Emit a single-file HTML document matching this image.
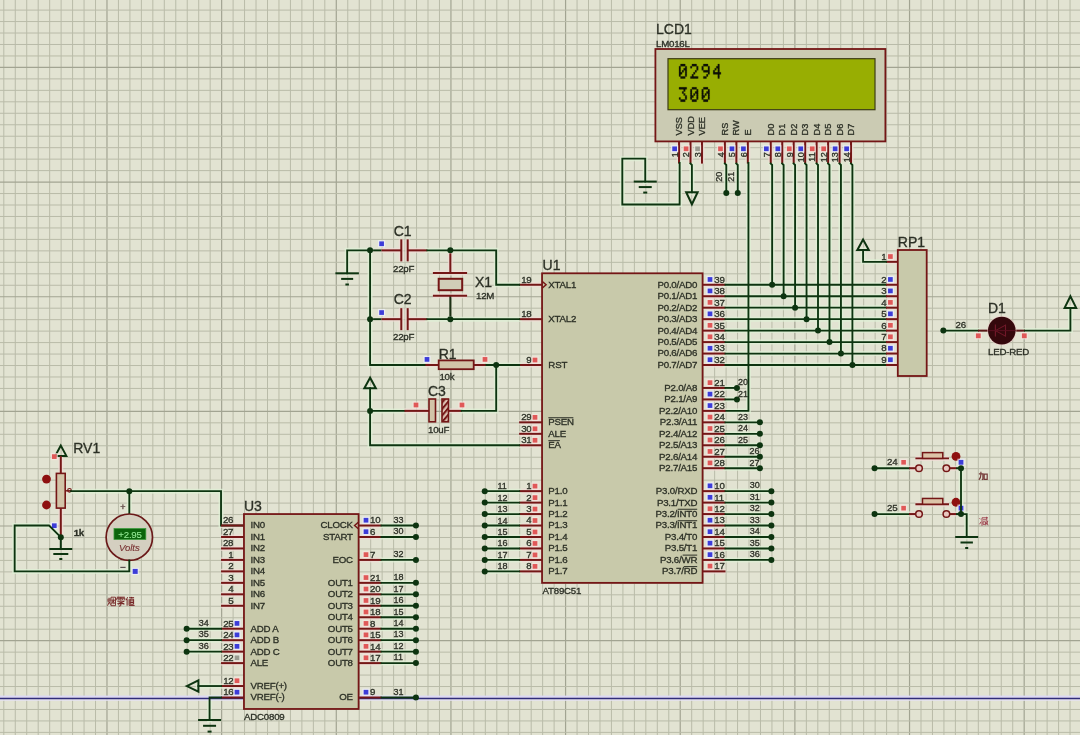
<!DOCTYPE html>
<html><head><meta charset="utf-8"><style>html,body{margin:0;padding:0;background:#e2e3d2;overflow:hidden}svg{display:block;filter:blur(0.45px)}</style></head>
<body><svg width="1080" height="735" viewBox="0 0 1080 735" font-family="Liberation Sans, sans-serif"><g shape-rendering="auto"><line x1="3.8" y1="0" x2="3.8" y2="735" stroke="#b9bba8" stroke-width="1"/><line x1="15.27" y1="0" x2="15.27" y2="735" stroke="#b9bba8" stroke-width="1"/><line x1="26.73" y1="0" x2="26.73" y2="735" stroke="#b9bba8" stroke-width="1"/><line x1="38.19" y1="0" x2="38.19" y2="735" stroke="#b9bba8" stroke-width="1"/><line x1="49.66" y1="0" x2="49.66" y2="735" stroke="#b9bba8" stroke-width="1"/><line x1="61.12" y1="0" x2="61.12" y2="735" stroke="#b9bba8" stroke-width="1"/><line x1="72.59" y1="0" x2="72.59" y2="735" stroke="#b9bba8" stroke-width="1"/><line x1="84.05" y1="0" x2="84.05" y2="735" stroke="#b9bba8" stroke-width="1"/><line x1="95.52" y1="0" x2="95.52" y2="735" stroke="#b9bba8" stroke-width="1"/><line x1="106.98" y1="0" x2="106.98" y2="735" stroke="#a2a492" stroke-width="1.2"/><line x1="118.45" y1="0" x2="118.45" y2="735" stroke="#b9bba8" stroke-width="1"/><line x1="129.91" y1="0" x2="129.91" y2="735" stroke="#b9bba8" stroke-width="1"/><line x1="141.38" y1="0" x2="141.38" y2="735" stroke="#b9bba8" stroke-width="1"/><line x1="152.84" y1="0" x2="152.84" y2="735" stroke="#b9bba8" stroke-width="1"/><line x1="164.31" y1="0" x2="164.31" y2="735" stroke="#b9bba8" stroke-width="1"/><line x1="175.78" y1="0" x2="175.78" y2="735" stroke="#b9bba8" stroke-width="1"/><line x1="187.24" y1="0" x2="187.24" y2="735" stroke="#b9bba8" stroke-width="1"/><line x1="198.71" y1="0" x2="198.71" y2="735" stroke="#b9bba8" stroke-width="1"/><line x1="210.17" y1="0" x2="210.17" y2="735" stroke="#b9bba8" stroke-width="1"/><line x1="221.64" y1="0" x2="221.64" y2="735" stroke="#a2a492" stroke-width="1.2"/><line x1="233.1" y1="0" x2="233.1" y2="735" stroke="#b9bba8" stroke-width="1"/><line x1="244.56" y1="0" x2="244.56" y2="735" stroke="#b9bba8" stroke-width="1"/><line x1="256.03" y1="0" x2="256.03" y2="735" stroke="#b9bba8" stroke-width="1"/><line x1="267.5" y1="0" x2="267.5" y2="735" stroke="#b9bba8" stroke-width="1"/><line x1="278.96" y1="0" x2="278.96" y2="735" stroke="#b9bba8" stroke-width="1"/><line x1="290.43" y1="0" x2="290.43" y2="735" stroke="#b9bba8" stroke-width="1"/><line x1="301.89" y1="0" x2="301.89" y2="735" stroke="#b9bba8" stroke-width="1"/><line x1="313.36" y1="0" x2="313.36" y2="735" stroke="#b9bba8" stroke-width="1"/><line x1="324.82" y1="0" x2="324.82" y2="735" stroke="#b9bba8" stroke-width="1"/><line x1="336.29" y1="0" x2="336.29" y2="735" stroke="#a2a492" stroke-width="1.2"/><line x1="347.75" y1="0" x2="347.75" y2="735" stroke="#b9bba8" stroke-width="1"/><line x1="359.22" y1="0" x2="359.22" y2="735" stroke="#b9bba8" stroke-width="1"/><line x1="370.68" y1="0" x2="370.68" y2="735" stroke="#b9bba8" stroke-width="1"/><line x1="382.14" y1="0" x2="382.14" y2="735" stroke="#b9bba8" stroke-width="1"/><line x1="393.61" y1="0" x2="393.61" y2="735" stroke="#b9bba8" stroke-width="1"/><line x1="405.07" y1="0" x2="405.07" y2="735" stroke="#b9bba8" stroke-width="1"/><line x1="416.54" y1="0" x2="416.54" y2="735" stroke="#b9bba8" stroke-width="1"/><line x1="428" y1="0" x2="428" y2="735" stroke="#b9bba8" stroke-width="1"/><line x1="439.47" y1="0" x2="439.47" y2="735" stroke="#b9bba8" stroke-width="1"/><line x1="450.94" y1="0" x2="450.94" y2="735" stroke="#a2a492" stroke-width="1.2"/><line x1="462.4" y1="0" x2="462.4" y2="735" stroke="#b9bba8" stroke-width="1"/><line x1="473.87" y1="0" x2="473.87" y2="735" stroke="#b9bba8" stroke-width="1"/><line x1="485.33" y1="0" x2="485.33" y2="735" stroke="#b9bba8" stroke-width="1"/><line x1="496.8" y1="0" x2="496.8" y2="735" stroke="#b9bba8" stroke-width="1"/><line x1="508.26" y1="0" x2="508.26" y2="735" stroke="#b9bba8" stroke-width="1"/><line x1="519.72" y1="0" x2="519.72" y2="735" stroke="#b9bba8" stroke-width="1"/><line x1="531.19" y1="0" x2="531.19" y2="735" stroke="#b9bba8" stroke-width="1"/><line x1="542.65" y1="0" x2="542.65" y2="735" stroke="#b9bba8" stroke-width="1"/><line x1="554.12" y1="0" x2="554.12" y2="735" stroke="#b9bba8" stroke-width="1"/><line x1="565.58" y1="0" x2="565.58" y2="735" stroke="#a2a492" stroke-width="1.2"/><line x1="577.05" y1="0" x2="577.05" y2="735" stroke="#b9bba8" stroke-width="1"/><line x1="588.51" y1="0" x2="588.51" y2="735" stroke="#b9bba8" stroke-width="1"/><line x1="599.98" y1="0" x2="599.98" y2="735" stroke="#b9bba8" stroke-width="1"/><line x1="611.44" y1="0" x2="611.44" y2="735" stroke="#b9bba8" stroke-width="1"/><line x1="622.91" y1="0" x2="622.91" y2="735" stroke="#b9bba8" stroke-width="1"/><line x1="634.38" y1="0" x2="634.38" y2="735" stroke="#b9bba8" stroke-width="1"/><line x1="645.84" y1="0" x2="645.84" y2="735" stroke="#b9bba8" stroke-width="1"/><line x1="657.3" y1="0" x2="657.3" y2="735" stroke="#b9bba8" stroke-width="1"/><line x1="668.77" y1="0" x2="668.77" y2="735" stroke="#b9bba8" stroke-width="1"/><line x1="680.23" y1="0" x2="680.23" y2="735" stroke="#a2a492" stroke-width="1.2"/><line x1="691.7" y1="0" x2="691.7" y2="735" stroke="#b9bba8" stroke-width="1"/><line x1="703.16" y1="0" x2="703.16" y2="735" stroke="#b9bba8" stroke-width="1"/><line x1="714.63" y1="0" x2="714.63" y2="735" stroke="#b9bba8" stroke-width="1"/><line x1="726.09" y1="0" x2="726.09" y2="735" stroke="#b9bba8" stroke-width="1"/><line x1="737.56" y1="0" x2="737.56" y2="735" stroke="#b9bba8" stroke-width="1"/><line x1="749.02" y1="0" x2="749.02" y2="735" stroke="#b9bba8" stroke-width="1"/><line x1="760.49" y1="0" x2="760.49" y2="735" stroke="#b9bba8" stroke-width="1"/><line x1="771.95" y1="0" x2="771.95" y2="735" stroke="#b9bba8" stroke-width="1"/><line x1="783.42" y1="0" x2="783.42" y2="735" stroke="#b9bba8" stroke-width="1"/><line x1="794.88" y1="0" x2="794.88" y2="735" stroke="#a2a492" stroke-width="1.2"/><line x1="806.35" y1="0" x2="806.35" y2="735" stroke="#b9bba8" stroke-width="1"/><line x1="817.81" y1="0" x2="817.81" y2="735" stroke="#b9bba8" stroke-width="1"/><line x1="829.28" y1="0" x2="829.28" y2="735" stroke="#b9bba8" stroke-width="1"/><line x1="840.74" y1="0" x2="840.74" y2="735" stroke="#b9bba8" stroke-width="1"/><line x1="852.21" y1="0" x2="852.21" y2="735" stroke="#b9bba8" stroke-width="1"/><line x1="863.67" y1="0" x2="863.67" y2="735" stroke="#b9bba8" stroke-width="1"/><line x1="875.14" y1="0" x2="875.14" y2="735" stroke="#b9bba8" stroke-width="1"/><line x1="886.6" y1="0" x2="886.6" y2="735" stroke="#b9bba8" stroke-width="1"/><line x1="898.07" y1="0" x2="898.07" y2="735" stroke="#b9bba8" stroke-width="1"/><line x1="909.53" y1="0" x2="909.53" y2="735" stroke="#a2a492" stroke-width="1.2"/><line x1="921" y1="0" x2="921" y2="735" stroke="#b9bba8" stroke-width="1"/><line x1="932.46" y1="0" x2="932.46" y2="735" stroke="#b9bba8" stroke-width="1"/><line x1="943.93" y1="0" x2="943.93" y2="735" stroke="#b9bba8" stroke-width="1"/><line x1="955.39" y1="0" x2="955.39" y2="735" stroke="#b9bba8" stroke-width="1"/><line x1="966.86" y1="0" x2="966.86" y2="735" stroke="#b9bba8" stroke-width="1"/><line x1="978.32" y1="0" x2="978.32" y2="735" stroke="#b9bba8" stroke-width="1"/><line x1="989.79" y1="0" x2="989.79" y2="735" stroke="#b9bba8" stroke-width="1"/><line x1="1001.25" y1="0" x2="1001.25" y2="735" stroke="#b9bba8" stroke-width="1"/><line x1="1012.72" y1="0" x2="1012.72" y2="735" stroke="#b9bba8" stroke-width="1"/><line x1="1024.18" y1="0" x2="1024.18" y2="735" stroke="#a2a492" stroke-width="1.2"/><line x1="1035.65" y1="0" x2="1035.65" y2="735" stroke="#b9bba8" stroke-width="1"/><line x1="1047.12" y1="0" x2="1047.12" y2="735" stroke="#b9bba8" stroke-width="1"/><line x1="1058.58" y1="0" x2="1058.58" y2="735" stroke="#b9bba8" stroke-width="1"/><line x1="1070.04" y1="0" x2="1070.04" y2="735" stroke="#b9bba8" stroke-width="1"/><line x1="0" y1="10.1" x2="1080" y2="10.1" stroke="#b9bba8" stroke-width="1"/><line x1="0" y1="21.56" x2="1080" y2="21.56" stroke="#b9bba8" stroke-width="1"/><line x1="0" y1="33.03" x2="1080" y2="33.03" stroke="#b9bba8" stroke-width="1"/><line x1="0" y1="44.49" x2="1080" y2="44.49" stroke="#b9bba8" stroke-width="1"/><line x1="0" y1="55.96" x2="1080" y2="55.96" stroke="#b9bba8" stroke-width="1"/><line x1="0" y1="67.42" x2="1080" y2="67.42" stroke="#a2a492" stroke-width="1.2"/><line x1="0" y1="78.89" x2="1080" y2="78.89" stroke="#b9bba8" stroke-width="1"/><line x1="0" y1="90.35" x2="1080" y2="90.35" stroke="#b9bba8" stroke-width="1"/><line x1="0" y1="101.82" x2="1080" y2="101.82" stroke="#b9bba8" stroke-width="1"/><line x1="0" y1="113.28" x2="1080" y2="113.28" stroke="#b9bba8" stroke-width="1"/><line x1="0" y1="124.75" x2="1080" y2="124.75" stroke="#b9bba8" stroke-width="1"/><line x1="0" y1="136.22" x2="1080" y2="136.22" stroke="#b9bba8" stroke-width="1"/><line x1="0" y1="147.68" x2="1080" y2="147.68" stroke="#b9bba8" stroke-width="1"/><line x1="0" y1="159.14" x2="1080" y2="159.14" stroke="#b9bba8" stroke-width="1"/><line x1="0" y1="170.61" x2="1080" y2="170.61" stroke="#b9bba8" stroke-width="1"/><line x1="0" y1="182.07" x2="1080" y2="182.07" stroke="#a2a492" stroke-width="1.2"/><line x1="0" y1="193.54" x2="1080" y2="193.54" stroke="#b9bba8" stroke-width="1"/><line x1="0" y1="205" x2="1080" y2="205" stroke="#b9bba8" stroke-width="1"/><line x1="0" y1="216.47" x2="1080" y2="216.47" stroke="#b9bba8" stroke-width="1"/><line x1="0" y1="227.94" x2="1080" y2="227.94" stroke="#b9bba8" stroke-width="1"/><line x1="0" y1="239.4" x2="1080" y2="239.4" stroke="#b9bba8" stroke-width="1"/><line x1="0" y1="250.86" x2="1080" y2="250.86" stroke="#b9bba8" stroke-width="1"/><line x1="0" y1="262.33" x2="1080" y2="262.33" stroke="#b9bba8" stroke-width="1"/><line x1="0" y1="273.8" x2="1080" y2="273.8" stroke="#b9bba8" stroke-width="1"/><line x1="0" y1="285.26" x2="1080" y2="285.26" stroke="#b9bba8" stroke-width="1"/><line x1="0" y1="296.73" x2="1080" y2="296.73" stroke="#a2a492" stroke-width="1.2"/><line x1="0" y1="308.19" x2="1080" y2="308.19" stroke="#b9bba8" stroke-width="1"/><line x1="0" y1="319.66" x2="1080" y2="319.66" stroke="#b9bba8" stroke-width="1"/><line x1="0" y1="331.12" x2="1080" y2="331.12" stroke="#b9bba8" stroke-width="1"/><line x1="0" y1="342.59" x2="1080" y2="342.59" stroke="#b9bba8" stroke-width="1"/><line x1="0" y1="354.05" x2="1080" y2="354.05" stroke="#b9bba8" stroke-width="1"/><line x1="0" y1="365.52" x2="1080" y2="365.52" stroke="#b9bba8" stroke-width="1"/><line x1="0" y1="376.98" x2="1080" y2="376.98" stroke="#b9bba8" stroke-width="1"/><line x1="0" y1="388.44" x2="1080" y2="388.44" stroke="#b9bba8" stroke-width="1"/><line x1="0" y1="399.91" x2="1080" y2="399.91" stroke="#b9bba8" stroke-width="1"/><line x1="0" y1="411.38" x2="1080" y2="411.38" stroke="#a2a492" stroke-width="1.2"/><line x1="0" y1="422.84" x2="1080" y2="422.84" stroke="#b9bba8" stroke-width="1"/><line x1="0" y1="434.31" x2="1080" y2="434.31" stroke="#b9bba8" stroke-width="1"/><line x1="0" y1="445.77" x2="1080" y2="445.77" stroke="#b9bba8" stroke-width="1"/><line x1="0" y1="457.24" x2="1080" y2="457.24" stroke="#b9bba8" stroke-width="1"/><line x1="0" y1="468.7" x2="1080" y2="468.7" stroke="#b9bba8" stroke-width="1"/><line x1="0" y1="480.17" x2="1080" y2="480.17" stroke="#b9bba8" stroke-width="1"/><line x1="0" y1="491.63" x2="1080" y2="491.63" stroke="#b9bba8" stroke-width="1"/><line x1="0" y1="503.1" x2="1080" y2="503.1" stroke="#b9bba8" stroke-width="1"/><line x1="0" y1="514.56" x2="1080" y2="514.56" stroke="#b9bba8" stroke-width="1"/><line x1="0" y1="526.02" x2="1080" y2="526.02" stroke="#a2a492" stroke-width="1.2"/><line x1="0" y1="537.49" x2="1080" y2="537.49" stroke="#b9bba8" stroke-width="1"/><line x1="0" y1="548.96" x2="1080" y2="548.96" stroke="#b9bba8" stroke-width="1"/><line x1="0" y1="560.42" x2="1080" y2="560.42" stroke="#b9bba8" stroke-width="1"/><line x1="0" y1="571.88" x2="1080" y2="571.88" stroke="#b9bba8" stroke-width="1"/><line x1="0" y1="583.35" x2="1080" y2="583.35" stroke="#b9bba8" stroke-width="1"/><line x1="0" y1="594.82" x2="1080" y2="594.82" stroke="#b9bba8" stroke-width="1"/><line x1="0" y1="606.28" x2="1080" y2="606.28" stroke="#b9bba8" stroke-width="1"/><line x1="0" y1="617.75" x2="1080" y2="617.75" stroke="#b9bba8" stroke-width="1"/><line x1="0" y1="629.21" x2="1080" y2="629.21" stroke="#b9bba8" stroke-width="1"/><line x1="0" y1="640.68" x2="1080" y2="640.68" stroke="#a2a492" stroke-width="1.2"/><line x1="0" y1="652.14" x2="1080" y2="652.14" stroke="#b9bba8" stroke-width="1"/><line x1="0" y1="663.61" x2="1080" y2="663.61" stroke="#b9bba8" stroke-width="1"/><line x1="0" y1="675.07" x2="1080" y2="675.07" stroke="#b9bba8" stroke-width="1"/><line x1="0" y1="686.53" x2="1080" y2="686.53" stroke="#b9bba8" stroke-width="1"/><line x1="0" y1="698" x2="1080" y2="698" stroke="#b9bba8" stroke-width="1"/><line x1="0" y1="709.47" x2="1080" y2="709.47" stroke="#b9bba8" stroke-width="1"/><line x1="0" y1="720.93" x2="1080" y2="720.93" stroke="#b9bba8" stroke-width="1"/><line x1="0" y1="732.39" x2="1080" y2="732.39" stroke="#b9bba8" stroke-width="1"/></g><g opacity="0.75"><line x1="679.03" y1="141.4" x2="679.03" y2="163.6" stroke="#f0dcd6" stroke-width="5"/><line x1="690.5" y1="141.4" x2="690.5" y2="163.6" stroke="#f0dcd6" stroke-width="5"/><line x1="701.97" y1="141.4" x2="701.97" y2="163.6" stroke="#f0dcd6" stroke-width="5"/><line x1="724.89" y1="141.4" x2="724.89" y2="163.6" stroke="#f0dcd6" stroke-width="5"/><line x1="736.36" y1="141.4" x2="736.36" y2="163.6" stroke="#f0dcd6" stroke-width="5"/><line x1="747.83" y1="141.4" x2="747.83" y2="163.6" stroke="#f0dcd6" stroke-width="5"/><line x1="770.75" y1="141.4" x2="770.75" y2="163.6" stroke="#f0dcd6" stroke-width="5"/><line x1="782.22" y1="141.4" x2="782.22" y2="163.6" stroke="#f0dcd6" stroke-width="5"/><line x1="793.69" y1="141.4" x2="793.69" y2="163.6" stroke="#f0dcd6" stroke-width="5"/><line x1="805.15" y1="141.4" x2="805.15" y2="163.6" stroke="#f0dcd6" stroke-width="5"/><line x1="816.62" y1="141.4" x2="816.62" y2="163.6" stroke="#f0dcd6" stroke-width="5"/><line x1="828.08" y1="141.4" x2="828.08" y2="163.6" stroke="#f0dcd6" stroke-width="5"/><line x1="839.54" y1="141.4" x2="839.54" y2="163.6" stroke="#f0dcd6" stroke-width="5"/><line x1="851.01" y1="141.4" x2="851.01" y2="163.6" stroke="#f0dcd6" stroke-width="5"/><polyline points="679.63,163 679.63,204.5 622.31,204.5 622.31,158.64 645.24,158.64 645.24,181.57" fill="none" stroke="#dff0d6" stroke-width="5" stroke-linejoin="miter" stroke-linecap="square"/><polyline points="690.5,163.6 691.9,165 691.9,192.2" fill="none" stroke="#dff0d6" stroke-width="5" stroke-linejoin="miter" stroke-linecap="square"/><polyline points="724.89,163.6 726.29,165 726.29,193.04" fill="none" stroke="#dff0d6" stroke-width="5" stroke-linejoin="miter" stroke-linecap="square"/><polyline points="736.36,163.6 737.76,165 737.76,193.04" fill="none" stroke="#dff0d6" stroke-width="5" stroke-linejoin="miter" stroke-linecap="square"/><polyline points="748.43,163 748.43,410.88 725.5,410.88" fill="none" stroke="#dff0d6" stroke-width="5" stroke-linejoin="miter" stroke-linecap="square"/><polyline points="770.75,163.6 772.15,165 772.15,284.76" fill="none" stroke="#dff0d6" stroke-width="5" stroke-linejoin="miter" stroke-linecap="square"/><polyline points="782.22,163.6 783.62,165 783.62,296.23" fill="none" stroke="#dff0d6" stroke-width="5" stroke-linejoin="miter" stroke-linecap="square"/><polyline points="793.69,163.6 795.09,165 795.09,307.69" fill="none" stroke="#dff0d6" stroke-width="5" stroke-linejoin="miter" stroke-linecap="square"/><polyline points="805.15,163.6 806.55,165 806.55,319.16" fill="none" stroke="#dff0d6" stroke-width="5" stroke-linejoin="miter" stroke-linecap="square"/><polyline points="816.62,163.6 818.01,165 818.01,330.62" fill="none" stroke="#dff0d6" stroke-width="5" stroke-linejoin="miter" stroke-linecap="square"/><polyline points="828.08,163.6 829.48,165 829.48,342.09" fill="none" stroke="#dff0d6" stroke-width="5" stroke-linejoin="miter" stroke-linecap="square"/><polyline points="839.54,163.6 840.94,165 840.94,353.55" fill="none" stroke="#dff0d6" stroke-width="5" stroke-linejoin="miter" stroke-linecap="square"/><polyline points="851.01,163.6 852.41,165 852.41,365.02" fill="none" stroke="#dff0d6" stroke-width="5" stroke-linejoin="miter" stroke-linecap="square"/><line x1="519.12" y1="284.76" x2="542.06" y2="284.76" stroke="#f0dcd6" stroke-width="5"/><line x1="519.12" y1="319.16" x2="542.06" y2="319.16" stroke="#f0dcd6" stroke-width="5"/><line x1="519.12" y1="365.02" x2="542.06" y2="365.02" stroke="#f0dcd6" stroke-width="5"/><line x1="519.12" y1="422.34" x2="542.06" y2="422.34" stroke="#f0dcd6" stroke-width="5"/><line x1="519.12" y1="433.81" x2="542.06" y2="433.81" stroke="#f0dcd6" stroke-width="5"/><line x1="519.12" y1="445.27" x2="542.06" y2="445.27" stroke="#f0dcd6" stroke-width="5"/><line x1="519.12" y1="491.13" x2="542.06" y2="491.13" stroke="#f0dcd6" stroke-width="5"/><line x1="519.12" y1="502.6" x2="542.06" y2="502.6" stroke="#f0dcd6" stroke-width="5"/><line x1="519.12" y1="514.06" x2="542.06" y2="514.06" stroke="#f0dcd6" stroke-width="5"/><line x1="519.12" y1="525.52" x2="542.06" y2="525.52" stroke="#f0dcd6" stroke-width="5"/><line x1="519.12" y1="536.99" x2="542.06" y2="536.99" stroke="#f0dcd6" stroke-width="5"/><line x1="519.12" y1="548.46" x2="542.06" y2="548.46" stroke="#f0dcd6" stroke-width="5"/><line x1="519.12" y1="559.92" x2="542.06" y2="559.92" stroke="#f0dcd6" stroke-width="5"/><line x1="519.12" y1="571.38" x2="542.06" y2="571.38" stroke="#f0dcd6" stroke-width="5"/><line x1="702.57" y1="284.76" x2="725.5" y2="284.76" stroke="#f0dcd6" stroke-width="5"/><line x1="702.57" y1="296.23" x2="725.5" y2="296.23" stroke="#f0dcd6" stroke-width="5"/><line x1="702.57" y1="307.69" x2="725.5" y2="307.69" stroke="#f0dcd6" stroke-width="5"/><line x1="702.57" y1="319.16" x2="725.5" y2="319.16" stroke="#f0dcd6" stroke-width="5"/><line x1="702.57" y1="330.62" x2="725.5" y2="330.62" stroke="#f0dcd6" stroke-width="5"/><line x1="702.57" y1="342.09" x2="725.5" y2="342.09" stroke="#f0dcd6" stroke-width="5"/><line x1="702.57" y1="353.55" x2="725.5" y2="353.55" stroke="#f0dcd6" stroke-width="5"/><line x1="702.57" y1="365.02" x2="725.5" y2="365.02" stroke="#f0dcd6" stroke-width="5"/><line x1="702.57" y1="387.94" x2="725.5" y2="387.94" stroke="#f0dcd6" stroke-width="5"/><line x1="702.57" y1="399.41" x2="725.5" y2="399.41" stroke="#f0dcd6" stroke-width="5"/><line x1="702.57" y1="410.88" x2="725.5" y2="410.88" stroke="#f0dcd6" stroke-width="5"/><line x1="702.57" y1="422.34" x2="725.5" y2="422.34" stroke="#f0dcd6" stroke-width="5"/><line x1="702.57" y1="433.81" x2="725.5" y2="433.81" stroke="#f0dcd6" stroke-width="5"/><line x1="702.57" y1="445.27" x2="725.5" y2="445.27" stroke="#f0dcd6" stroke-width="5"/><line x1="702.57" y1="456.74" x2="725.5" y2="456.74" stroke="#f0dcd6" stroke-width="5"/><line x1="702.57" y1="468.2" x2="725.5" y2="468.2" stroke="#f0dcd6" stroke-width="5"/><line x1="702.57" y1="491.13" x2="725.5" y2="491.13" stroke="#f0dcd6" stroke-width="5"/><line x1="702.57" y1="502.6" x2="725.5" y2="502.6" stroke="#f0dcd6" stroke-width="5"/><line x1="702.57" y1="514.06" x2="725.5" y2="514.06" stroke="#f0dcd6" stroke-width="5"/><line x1="702.57" y1="525.52" x2="725.5" y2="525.52" stroke="#f0dcd6" stroke-width="5"/><line x1="702.57" y1="536.99" x2="725.5" y2="536.99" stroke="#f0dcd6" stroke-width="5"/><line x1="702.57" y1="548.46" x2="725.5" y2="548.46" stroke="#f0dcd6" stroke-width="5"/><line x1="702.57" y1="559.92" x2="725.5" y2="559.92" stroke="#f0dcd6" stroke-width="5"/><line x1="702.57" y1="571.38" x2="725.5" y2="571.38" stroke="#f0dcd6" stroke-width="5"/><polyline points="725.5,284.76 886,284.76" fill="none" stroke="#dff0d6" stroke-width="5" stroke-linejoin="miter" stroke-linecap="square"/><polyline points="725.5,296.23 886,296.23" fill="none" stroke="#dff0d6" stroke-width="5" stroke-linejoin="miter" stroke-linecap="square"/><polyline points="725.5,307.69 886,307.69" fill="none" stroke="#dff0d6" stroke-width="5" stroke-linejoin="miter" stroke-linecap="square"/><polyline points="725.5,319.16 886,319.16" fill="none" stroke="#dff0d6" stroke-width="5" stroke-linejoin="miter" stroke-linecap="square"/><polyline points="725.5,330.62 886,330.62" fill="none" stroke="#dff0d6" stroke-width="5" stroke-linejoin="miter" stroke-linecap="square"/><polyline points="725.5,342.09 886,342.09" fill="none" stroke="#dff0d6" stroke-width="5" stroke-linejoin="miter" stroke-linecap="square"/><polyline points="725.5,353.55 886,353.55" fill="none" stroke="#dff0d6" stroke-width="5" stroke-linejoin="miter" stroke-linecap="square"/><polyline points="725.5,365.02 886,365.02" fill="none" stroke="#dff0d6" stroke-width="5" stroke-linejoin="miter" stroke-linecap="square"/><polyline points="725.5,387.94 736.96,387.94" fill="none" stroke="#dff0d6" stroke-width="5" stroke-linejoin="miter" stroke-linecap="square"/><polyline points="725.5,399.41 736.96,399.41" fill="none" stroke="#dff0d6" stroke-width="5" stroke-linejoin="miter" stroke-linecap="square"/><polyline points="725.5,422.34 759.89,422.34" fill="none" stroke="#dff0d6" stroke-width="5" stroke-linejoin="miter" stroke-linecap="square"/><polyline points="725.5,433.81 759.89,433.81" fill="none" stroke="#dff0d6" stroke-width="5" stroke-linejoin="miter" stroke-linecap="square"/><polyline points="725.5,445.27 759.89,445.27" fill="none" stroke="#dff0d6" stroke-width="5" stroke-linejoin="miter" stroke-linecap="square"/><polyline points="725.5,456.74 759.89,456.74" fill="none" stroke="#dff0d6" stroke-width="5" stroke-linejoin="miter" stroke-linecap="square"/><polyline points="725.5,468.2 759.89,468.2" fill="none" stroke="#dff0d6" stroke-width="5" stroke-linejoin="miter" stroke-linecap="square"/><polyline points="725.5,491.13 771.36,491.13" fill="none" stroke="#dff0d6" stroke-width="5" stroke-linejoin="miter" stroke-linecap="square"/><polyline points="725.5,502.6 771.36,502.6" fill="none" stroke="#dff0d6" stroke-width="5" stroke-linejoin="miter" stroke-linecap="square"/><polyline points="725.5,514.06 771.36,514.06" fill="none" stroke="#dff0d6" stroke-width="5" stroke-linejoin="miter" stroke-linecap="square"/><polyline points="725.5,525.52 771.36,525.52" fill="none" stroke="#dff0d6" stroke-width="5" stroke-linejoin="miter" stroke-linecap="square"/><polyline points="725.5,536.99 771.36,536.99" fill="none" stroke="#dff0d6" stroke-width="5" stroke-linejoin="miter" stroke-linecap="square"/><polyline points="725.5,548.46 771.36,548.46" fill="none" stroke="#dff0d6" stroke-width="5" stroke-linejoin="miter" stroke-linecap="square"/><polyline points="725.5,559.92 771.36,559.92" fill="none" stroke="#dff0d6" stroke-width="5" stroke-linejoin="miter" stroke-linecap="square"/><polyline points="519.12,491.13 484.73,491.13" fill="none" stroke="#dff0d6" stroke-width="5" stroke-linejoin="miter" stroke-linecap="square"/><polyline points="519.12,502.6 484.73,502.6" fill="none" stroke="#dff0d6" stroke-width="5" stroke-linejoin="miter" stroke-linecap="square"/><polyline points="519.12,514.06 484.73,514.06" fill="none" stroke="#dff0d6" stroke-width="5" stroke-linejoin="miter" stroke-linecap="square"/><polyline points="519.12,525.52 484.73,525.52" fill="none" stroke="#dff0d6" stroke-width="5" stroke-linejoin="miter" stroke-linecap="square"/><polyline points="519.12,536.99 484.73,536.99" fill="none" stroke="#dff0d6" stroke-width="5" stroke-linejoin="miter" stroke-linecap="square"/><polyline points="519.12,548.46 484.73,548.46" fill="none" stroke="#dff0d6" stroke-width="5" stroke-linejoin="miter" stroke-linecap="square"/><polyline points="519.12,559.92 484.73,559.92" fill="none" stroke="#dff0d6" stroke-width="5" stroke-linejoin="miter" stroke-linecap="square"/><polyline points="519.12,571.38 484.73,571.38" fill="none" stroke="#dff0d6" stroke-width="5" stroke-linejoin="miter" stroke-linecap="square"/><polyline points="347.15,273.3 347.15,250.36 370.08,250.36" fill="none" stroke="#dff0d6" stroke-width="5" stroke-linejoin="miter" stroke-linecap="square"/><polyline points="370.08,250.36 370.08,365.02 438.7,365.02" fill="none" stroke="#dff0d6" stroke-width="5" stroke-linejoin="miter" stroke-linecap="square"/><line x1="381.54" y1="250.36" x2="401.3" y2="250.36" stroke="#f0dcd6" stroke-width="5"/><line x1="407.7" y1="250.36" x2="427.4" y2="250.36" stroke="#f0dcd6" stroke-width="5"/><line x1="401.3" y1="239.36" x2="401.3" y2="261.37" stroke="#f0dcd6" stroke-width="5"/><line x1="407.7" y1="239.36" x2="407.7" y2="261.37" stroke="#f0dcd6" stroke-width="5"/><line x1="381.54" y1="319.16" x2="401.3" y2="319.16" stroke="#f0dcd6" stroke-width="5"/><line x1="407.7" y1="319.16" x2="427.4" y2="319.16" stroke="#f0dcd6" stroke-width="5"/><line x1="401.3" y1="308.16" x2="401.3" y2="330.16" stroke="#f0dcd6" stroke-width="5"/><line x1="407.7" y1="308.16" x2="407.7" y2="330.16" stroke="#f0dcd6" stroke-width="5"/><polyline points="427.4,250.36 496.19,250.36 496.19,284.76 519.12,284.76" fill="none" stroke="#dff0d6" stroke-width="5" stroke-linejoin="miter" stroke-linecap="square"/><polyline points="427.4,319.16 519.12,319.16" fill="none" stroke="#dff0d6" stroke-width="5" stroke-linejoin="miter" stroke-linecap="square"/><line x1="450.33" y1="253.36" x2="450.33" y2="272.9" stroke="#f0dcd6" stroke-width="5"/><line x1="432.9" y1="272.9" x2="467.1" y2="272.9" stroke="#f0dcd6" stroke-width="5"/><line x1="432.9" y1="295.8" x2="467.1" y2="295.8" stroke="#f0dcd6" stroke-width="5"/><line x1="425.4" y1="365.02" x2="438.7" y2="365.02" stroke="#f0dcd6" stroke-width="5"/><line x1="473.7" y1="365.02" x2="486.5" y2="365.02" stroke="#f0dcd6" stroke-width="5"/><polyline points="486.5,365.02 519.12,365.02" fill="none" stroke="#dff0d6" stroke-width="5" stroke-linejoin="miter" stroke-linecap="square"/><polyline points="370.08,410.88 404.47,410.88" fill="none" stroke="#dff0d6" stroke-width="5" stroke-linejoin="miter" stroke-linecap="square"/><line x1="404.47" y1="410.88" x2="429" y2="410.88" stroke="#f0dcd6" stroke-width="5"/><line x1="448.5" y1="410.88" x2="461.8" y2="410.88" stroke="#f0dcd6" stroke-width="5"/><polyline points="461.8,410.88 496.19,410.88 496.19,365.02" fill="none" stroke="#dff0d6" stroke-width="5" stroke-linejoin="miter" stroke-linecap="square"/><polyline points="370.08,388.2 370.08,445.27 519.12,445.27" fill="none" stroke="#dff0d6" stroke-width="5" stroke-linejoin="miter" stroke-linecap="square"/><line x1="886" y1="261.83" x2="897.8" y2="261.83" stroke="#f0dcd6" stroke-width="5"/><line x1="886" y1="284.76" x2="897.8" y2="284.76" stroke="#f0dcd6" stroke-width="5"/><line x1="886" y1="296.23" x2="897.8" y2="296.23" stroke="#f0dcd6" stroke-width="5"/><line x1="886" y1="307.69" x2="897.8" y2="307.69" stroke="#f0dcd6" stroke-width="5"/><line x1="886" y1="319.16" x2="897.8" y2="319.16" stroke="#f0dcd6" stroke-width="5"/><line x1="886" y1="330.62" x2="897.8" y2="330.62" stroke="#f0dcd6" stroke-width="5"/><line x1="886" y1="342.09" x2="897.8" y2="342.09" stroke="#f0dcd6" stroke-width="5"/><line x1="886" y1="353.55" x2="897.8" y2="353.55" stroke="#f0dcd6" stroke-width="5"/><line x1="886" y1="365.02" x2="897.8" y2="365.02" stroke="#f0dcd6" stroke-width="5"/><polyline points="863.08,250 863.08,261.83 886,261.83" fill="none" stroke="#dff0d6" stroke-width="5" stroke-linejoin="miter" stroke-linecap="square"/><polyline points="943.33,330.62 978,330.62" fill="none" stroke="#dff0d6" stroke-width="5" stroke-linejoin="miter" stroke-linecap="square"/><polyline points="1025,330.62 1070.4,330.62 1070.4,307.9" fill="none" stroke="#dff0d6" stroke-width="5" stroke-linejoin="miter" stroke-linecap="square"/><polyline points="874.54,468.2 909,468.2" fill="none" stroke="#dff0d6" stroke-width="5" stroke-linejoin="miter" stroke-linecap="square"/><line x1="909" y1="468.2" x2="915.4" y2="468.2" stroke="#f0dcd6" stroke-width="5"/><line x1="949.8" y1="468.2" x2="956" y2="468.2" stroke="#f0dcd6" stroke-width="5"/><line x1="915.4" y1="458.4" x2="949" y2="458.4" stroke="#f0dcd6" stroke-width="5"/><polyline points="874.54,514.06 909,514.06" fill="none" stroke="#dff0d6" stroke-width="5" stroke-linejoin="miter" stroke-linecap="square"/><line x1="909" y1="514.06" x2="915.4" y2="514.06" stroke="#f0dcd6" stroke-width="5"/><line x1="949.8" y1="514.06" x2="956" y2="514.06" stroke="#f0dcd6" stroke-width="5"/><line x1="915.4" y1="504.26" x2="949" y2="504.26" stroke="#f0dcd6" stroke-width="5"/><polyline points="961,468.2 961,514.06 966.7,514.06 966.7,537" fill="none" stroke="#dff0d6" stroke-width="5" stroke-linejoin="miter" stroke-linecap="square"/><line x1="60.8" y1="455.9" x2="60.8" y2="473.4" stroke="#f0dcd6" stroke-width="5"/><line x1="60.8" y1="508.1" x2="60.8" y2="537.3" stroke="#f0dcd6" stroke-width="5"/><line x1="65.5" y1="490.8" x2="71.1" y2="490.8" stroke="#f0dcd6" stroke-width="5"/><polyline points="71.1,491.13 221.03,491.13 221.03,525.52 243.96,525.52" fill="none" stroke="#dff0d6" stroke-width="5" stroke-linejoin="miter" stroke-linecap="square"/><polyline points="129.31,491.13 129.31,514" fill="none" stroke="#dff0d6" stroke-width="5" stroke-linejoin="miter" stroke-linecap="square"/><polyline points="129.31,560.4 129.31,571.38 14.66,571.38 14.66,525.52 49.1,525.52 60.8,537.3" fill="none" stroke="#dff0d6" stroke-width="5" stroke-linejoin="miter" stroke-linecap="square"/><line x1="221.03" y1="525.52" x2="243.96" y2="525.52" stroke="#f0dcd6" stroke-width="5"/><line x1="221.03" y1="536.99" x2="243.96" y2="536.99" stroke="#f0dcd6" stroke-width="5"/><line x1="221.03" y1="548.46" x2="243.96" y2="548.46" stroke="#f0dcd6" stroke-width="5"/><line x1="221.03" y1="559.92" x2="243.96" y2="559.92" stroke="#f0dcd6" stroke-width="5"/><line x1="221.03" y1="571.38" x2="243.96" y2="571.38" stroke="#f0dcd6" stroke-width="5"/><line x1="221.03" y1="582.85" x2="243.96" y2="582.85" stroke="#f0dcd6" stroke-width="5"/><line x1="221.03" y1="594.32" x2="243.96" y2="594.32" stroke="#f0dcd6" stroke-width="5"/><line x1="221.03" y1="605.78" x2="243.96" y2="605.78" stroke="#f0dcd6" stroke-width="5"/><line x1="221.03" y1="628.71" x2="243.96" y2="628.71" stroke="#f0dcd6" stroke-width="5"/><line x1="221.03" y1="640.18" x2="243.96" y2="640.18" stroke="#f0dcd6" stroke-width="5"/><line x1="221.03" y1="651.64" x2="243.96" y2="651.64" stroke="#f0dcd6" stroke-width="5"/><line x1="221.03" y1="663.11" x2="243.96" y2="663.11" stroke="#f0dcd6" stroke-width="5"/><line x1="221.03" y1="686.03" x2="243.96" y2="686.03" stroke="#f0dcd6" stroke-width="5"/><line x1="221.03" y1="697.5" x2="243.96" y2="697.5" stroke="#f0dcd6" stroke-width="5"/><line x1="358.62" y1="525.52" x2="381.54" y2="525.52" stroke="#f0dcd6" stroke-width="5"/><line x1="358.62" y1="536.99" x2="381.54" y2="536.99" stroke="#f0dcd6" stroke-width="5"/><line x1="358.62" y1="559.92" x2="381.54" y2="559.92" stroke="#f0dcd6" stroke-width="5"/><line x1="358.62" y1="582.85" x2="381.54" y2="582.85" stroke="#f0dcd6" stroke-width="5"/><line x1="358.62" y1="594.32" x2="381.54" y2="594.32" stroke="#f0dcd6" stroke-width="5"/><line x1="358.62" y1="605.78" x2="381.54" y2="605.78" stroke="#f0dcd6" stroke-width="5"/><line x1="358.62" y1="617.25" x2="381.54" y2="617.25" stroke="#f0dcd6" stroke-width="5"/><line x1="358.62" y1="628.71" x2="381.54" y2="628.71" stroke="#f0dcd6" stroke-width="5"/><line x1="358.62" y1="640.18" x2="381.54" y2="640.18" stroke="#f0dcd6" stroke-width="5"/><line x1="358.62" y1="651.64" x2="381.54" y2="651.64" stroke="#f0dcd6" stroke-width="5"/><line x1="358.62" y1="663.11" x2="381.54" y2="663.11" stroke="#f0dcd6" stroke-width="5"/><line x1="358.62" y1="697.5" x2="381.54" y2="697.5" stroke="#f0dcd6" stroke-width="5"/><polyline points="381.54,525.52 415.94,525.52" fill="none" stroke="#dff0d6" stroke-width="5" stroke-linejoin="miter" stroke-linecap="square"/><polyline points="381.54,536.99 415.94,536.99" fill="none" stroke="#dff0d6" stroke-width="5" stroke-linejoin="miter" stroke-linecap="square"/><polyline points="381.54,559.92 415.94,559.92" fill="none" stroke="#dff0d6" stroke-width="5" stroke-linejoin="miter" stroke-linecap="square"/><polyline points="381.54,582.85 415.94,582.85" fill="none" stroke="#dff0d6" stroke-width="5" stroke-linejoin="miter" stroke-linecap="square"/><polyline points="381.54,594.32 415.94,594.32" fill="none" stroke="#dff0d6" stroke-width="5" stroke-linejoin="miter" stroke-linecap="square"/><polyline points="381.54,605.78 415.94,605.78" fill="none" stroke="#dff0d6" stroke-width="5" stroke-linejoin="miter" stroke-linecap="square"/><polyline points="381.54,617.25 415.94,617.25" fill="none" stroke="#dff0d6" stroke-width="5" stroke-linejoin="miter" stroke-linecap="square"/><polyline points="381.54,628.71 415.94,628.71" fill="none" stroke="#dff0d6" stroke-width="5" stroke-linejoin="miter" stroke-linecap="square"/><polyline points="381.54,640.18 415.94,640.18" fill="none" stroke="#dff0d6" stroke-width="5" stroke-linejoin="miter" stroke-linecap="square"/><polyline points="381.54,651.64 415.94,651.64" fill="none" stroke="#dff0d6" stroke-width="5" stroke-linejoin="miter" stroke-linecap="square"/><polyline points="381.54,663.11 415.94,663.11" fill="none" stroke="#dff0d6" stroke-width="5" stroke-linejoin="miter" stroke-linecap="square"/><polyline points="381.54,697.5 415.94,697.5" fill="none" stroke="#dff0d6" stroke-width="5" stroke-linejoin="miter" stroke-linecap="square"/><polyline points="221.03,628.71 186.64,628.71" fill="none" stroke="#dff0d6" stroke-width="5" stroke-linejoin="miter" stroke-linecap="square"/><polyline points="221.03,640.18 186.64,640.18" fill="none" stroke="#dff0d6" stroke-width="5" stroke-linejoin="miter" stroke-linecap="square"/><polyline points="221.03,651.64 186.64,651.64" fill="none" stroke="#dff0d6" stroke-width="5" stroke-linejoin="miter" stroke-linecap="square"/><polyline points="221.03,686.03 198.4,686.03" fill="none" stroke="#dff0d6" stroke-width="5" stroke-linejoin="miter" stroke-linecap="square"/><polyline points="221.03,697.5 209.57,697.5 209.57,720" fill="none" stroke="#dff0d6" stroke-width="5" stroke-linejoin="miter" stroke-linecap="square"/></g><rect x="0" y="695.6" width="1080" height="2.2" fill="#dcd8f6"/>
<rect x="0" y="699.2" width="1080" height="1.6" fill="#e4e2f2"/>
<line x1="0" y1="698.4" x2="1080" y2="698.4" stroke="#302c78" stroke-width="1.5" stroke-linecap="butt"/>
<text x="656" y="33.5" font-size="14" text-anchor="start" fill="#2c3026" stroke="#2c3026" stroke-width="0.32"  >LCD1</text>
<text x="656" y="46.7" font-size="9.7" text-anchor="start" fill="#2c3026" stroke="#2c3026" stroke-width="0.32" letter-spacing="-0.22" >LM016L</text>
<rect x="655.4" y="49" width="230" height="92.4" fill="#cbcbb3" stroke="#741616" stroke-width="1.8"/>
<rect x="668" y="58.7" width="207" height="51" fill="#98ae02" stroke="#3c3c14" stroke-width="1.2"/>
<path d="M680.55,64.1h1.55v2.05h-1.55zM682.1,64.1h1.55v2.05h-1.55zM683.65,64.1h1.55v2.05h-1.55zM679,66.15h1.55v2.05h-1.55zM685.2,66.15h1.55v2.05h-1.55zM679,68.2h1.55v2.05h-1.55zM683.65,68.2h1.55v2.05h-1.55zM685.2,68.2h1.55v2.05h-1.55zM679,70.25h1.55v2.05h-1.55zM682.1,70.25h1.55v2.05h-1.55zM685.2,70.25h1.55v2.05h-1.55zM679,72.3h1.55v2.05h-1.55zM680.55,72.3h1.55v2.05h-1.55zM685.2,72.3h1.55v2.05h-1.55zM679,74.35h1.55v2.05h-1.55zM685.2,74.35h1.55v2.05h-1.55zM680.55,76.4h1.55v2.05h-1.55zM682.1,76.4h1.55v2.05h-1.55zM683.65,76.4h1.55v2.05h-1.55z" fill="#12140a" stroke="#12140a" stroke-width="0.25"/>
<path d="M691.95,64.1h1.55v2.05h-1.55zM693.5,64.1h1.55v2.05h-1.55zM695.05,64.1h1.55v2.05h-1.55zM690.4,66.15h1.55v2.05h-1.55zM696.6,66.15h1.55v2.05h-1.55zM696.6,68.2h1.55v2.05h-1.55zM695.05,70.25h1.55v2.05h-1.55zM693.5,72.3h1.55v2.05h-1.55zM691.95,74.35h1.55v2.05h-1.55zM690.4,76.4h1.55v2.05h-1.55zM691.95,76.4h1.55v2.05h-1.55zM693.5,76.4h1.55v2.05h-1.55zM695.05,76.4h1.55v2.05h-1.55zM696.6,76.4h1.55v2.05h-1.55z" fill="#12140a" stroke="#12140a" stroke-width="0.25"/>
<path d="M703.35,64.1h1.55v2.05h-1.55zM704.9,64.1h1.55v2.05h-1.55zM706.45,64.1h1.55v2.05h-1.55zM701.8,66.15h1.55v2.05h-1.55zM708,66.15h1.55v2.05h-1.55zM701.8,68.2h1.55v2.05h-1.55zM708,68.2h1.55v2.05h-1.55zM703.35,70.25h1.55v2.05h-1.55zM704.9,70.25h1.55v2.05h-1.55zM706.45,70.25h1.55v2.05h-1.55zM708,70.25h1.55v2.05h-1.55zM708,72.3h1.55v2.05h-1.55zM706.45,74.35h1.55v2.05h-1.55zM703.35,76.4h1.55v2.05h-1.55zM704.9,76.4h1.55v2.05h-1.55z" fill="#12140a" stroke="#12140a" stroke-width="0.25"/>
<path d="M717.85,64.1h1.55v2.05h-1.55zM716.3,66.15h1.55v2.05h-1.55zM717.85,66.15h1.55v2.05h-1.55zM714.75,68.2h1.55v2.05h-1.55zM717.85,68.2h1.55v2.05h-1.55zM713.2,70.25h1.55v2.05h-1.55zM717.85,70.25h1.55v2.05h-1.55zM713.2,72.3h1.55v2.05h-1.55zM714.75,72.3h1.55v2.05h-1.55zM716.3,72.3h1.55v2.05h-1.55zM717.85,72.3h1.55v2.05h-1.55zM719.4,72.3h1.55v2.05h-1.55zM717.85,74.35h1.55v2.05h-1.55zM717.85,76.4h1.55v2.05h-1.55z" fill="#12140a" stroke="#12140a" stroke-width="0.25"/>
<path d="M679,87.3h1.55v2.05h-1.55zM680.55,87.3h1.55v2.05h-1.55zM682.1,87.3h1.55v2.05h-1.55zM683.65,87.3h1.55v2.05h-1.55zM685.2,87.3h1.55v2.05h-1.55zM683.65,89.35h1.55v2.05h-1.55zM682.1,91.4h1.55v2.05h-1.55zM683.65,93.45h1.55v2.05h-1.55zM685.2,95.5h1.55v2.05h-1.55zM679,97.55h1.55v2.05h-1.55zM685.2,97.55h1.55v2.05h-1.55zM680.55,99.6h1.55v2.05h-1.55zM682.1,99.6h1.55v2.05h-1.55zM683.65,99.6h1.55v2.05h-1.55z" fill="#12140a" stroke="#12140a" stroke-width="0.25"/>
<path d="M691.95,87.3h1.55v2.05h-1.55zM693.5,87.3h1.55v2.05h-1.55zM695.05,87.3h1.55v2.05h-1.55zM690.4,89.35h1.55v2.05h-1.55zM696.6,89.35h1.55v2.05h-1.55zM690.4,91.4h1.55v2.05h-1.55zM695.05,91.4h1.55v2.05h-1.55zM696.6,91.4h1.55v2.05h-1.55zM690.4,93.45h1.55v2.05h-1.55zM693.5,93.45h1.55v2.05h-1.55zM696.6,93.45h1.55v2.05h-1.55zM690.4,95.5h1.55v2.05h-1.55zM691.95,95.5h1.55v2.05h-1.55zM696.6,95.5h1.55v2.05h-1.55zM690.4,97.55h1.55v2.05h-1.55zM696.6,97.55h1.55v2.05h-1.55zM691.95,99.6h1.55v2.05h-1.55zM693.5,99.6h1.55v2.05h-1.55zM695.05,99.6h1.55v2.05h-1.55z" fill="#12140a" stroke="#12140a" stroke-width="0.25"/>
<path d="M703.35,87.3h1.55v2.05h-1.55zM704.9,87.3h1.55v2.05h-1.55zM706.45,87.3h1.55v2.05h-1.55zM701.8,89.35h1.55v2.05h-1.55zM708,89.35h1.55v2.05h-1.55zM701.8,91.4h1.55v2.05h-1.55zM706.45,91.4h1.55v2.05h-1.55zM708,91.4h1.55v2.05h-1.55zM701.8,93.45h1.55v2.05h-1.55zM704.9,93.45h1.55v2.05h-1.55zM708,93.45h1.55v2.05h-1.55zM701.8,95.5h1.55v2.05h-1.55zM703.35,95.5h1.55v2.05h-1.55zM708,95.5h1.55v2.05h-1.55zM701.8,97.55h1.55v2.05h-1.55zM708,97.55h1.55v2.05h-1.55zM703.35,99.6h1.55v2.05h-1.55zM704.9,99.6h1.55v2.05h-1.55zM706.45,99.6h1.55v2.05h-1.55z" fill="#12140a" stroke="#12140a" stroke-width="0.25"/>
<line x1="679.03" y1="141.4" x2="679.03" y2="163.6" stroke="#741616" stroke-width="2" stroke-linecap="butt"/>
<text transform="translate(678.84,135.5) rotate(-90)" x="0" y="3.31" font-size="9.2" text-anchor="start" fill="#2c3026" stroke="#2c3026" stroke-width="0.32">VSS</text>
<rect x="671.03" y="145.2" width="7.2" height="7.2" fill="#eef0ff" opacity="0.7"/>
<rect x="672.28" y="146.45" width="4.7" height="4.7" fill="#3c3cd8"/>
<text transform="translate(674.63,152.3) rotate(-90)" x="0" y="3.24" font-size="9" text-anchor="end" fill="#2c3026" stroke="#2c3026" stroke-width="0.32">1</text>
<line x1="690.5" y1="141.4" x2="690.5" y2="163.6" stroke="#741616" stroke-width="2" stroke-linecap="butt"/>
<text transform="translate(690.3,135.5) rotate(-90)" x="0" y="3.31" font-size="9.2" text-anchor="start" fill="#2c3026" stroke="#2c3026" stroke-width="0.32">VDD</text>
<rect x="682.5" y="145.2" width="7.2" height="7.2" fill="#f6e6e0" opacity="0.7"/>
<rect x="683.75" y="146.45" width="4.7" height="4.7" fill="#e05858"/>
<text transform="translate(686.1,152.3) rotate(-90)" x="0" y="3.24" font-size="9" text-anchor="end" fill="#2c3026" stroke="#2c3026" stroke-width="0.32">2</text>
<line x1="701.97" y1="141.4" x2="701.97" y2="163.6" stroke="#741616" stroke-width="2" stroke-linecap="butt"/>
<text transform="translate(701.77,135.5) rotate(-90)" x="0" y="3.31" font-size="9.2" text-anchor="start" fill="#2c3026" stroke="#2c3026" stroke-width="0.32">VEE</text>
<rect x="693.97" y="145.2" width="7.2" height="7.2" fill="#ecece6" opacity="0.7"/>
<rect x="695.22" y="146.45" width="4.7" height="4.7" fill="#9a9a90"/>
<text transform="translate(697.57,152.3) rotate(-90)" x="0" y="3.24" font-size="9" text-anchor="end" fill="#2c3026" stroke="#2c3026" stroke-width="0.32">3</text>
<line x1="724.89" y1="141.4" x2="724.89" y2="163.6" stroke="#741616" stroke-width="2" stroke-linecap="butt"/>
<text transform="translate(724.7,135.5) rotate(-90)" x="0" y="3.31" font-size="9.2" text-anchor="start" fill="#2c3026" stroke="#2c3026" stroke-width="0.32">RS</text>
<rect x="716.89" y="145.2" width="7.2" height="7.2" fill="#f6e6e0" opacity="0.7"/>
<rect x="718.14" y="146.45" width="4.7" height="4.7" fill="#e05858"/>
<text transform="translate(720.5,152.3) rotate(-90)" x="0" y="3.24" font-size="9" text-anchor="end" fill="#2c3026" stroke="#2c3026" stroke-width="0.32">4</text>
<line x1="736.36" y1="141.4" x2="736.36" y2="163.6" stroke="#741616" stroke-width="2" stroke-linecap="butt"/>
<text transform="translate(736.16,135.5) rotate(-90)" x="0" y="3.31" font-size="9.2" text-anchor="start" fill="#2c3026" stroke="#2c3026" stroke-width="0.32">RW</text>
<rect x="728.36" y="145.2" width="7.2" height="7.2" fill="#eef0ff" opacity="0.7"/>
<rect x="729.61" y="146.45" width="4.7" height="4.7" fill="#3c3cd8"/>
<text transform="translate(731.96,152.3) rotate(-90)" x="0" y="3.24" font-size="9" text-anchor="end" fill="#2c3026" stroke="#2c3026" stroke-width="0.32">5</text>
<line x1="747.83" y1="141.4" x2="747.83" y2="163.6" stroke="#741616" stroke-width="2" stroke-linecap="butt"/>
<text transform="translate(747.63,135.5) rotate(-90)" x="0" y="3.31" font-size="9.2" text-anchor="start" fill="#2c3026" stroke="#2c3026" stroke-width="0.32">E</text>
<rect x="739.83" y="145.2" width="7.2" height="7.2" fill="#eef0ff" opacity="0.7"/>
<rect x="741.08" y="146.45" width="4.7" height="4.7" fill="#3c3cd8"/>
<text transform="translate(743.43,152.3) rotate(-90)" x="0" y="3.24" font-size="9" text-anchor="end" fill="#2c3026" stroke="#2c3026" stroke-width="0.32">6</text>
<line x1="770.75" y1="141.4" x2="770.75" y2="163.6" stroke="#741616" stroke-width="2" stroke-linecap="butt"/>
<text transform="translate(770.56,135.5) rotate(-90)" x="0" y="3.31" font-size="9.2" text-anchor="start" fill="#2c3026" stroke="#2c3026" stroke-width="0.32">D0</text>
<rect x="762.75" y="145.2" width="7.2" height="7.2" fill="#eef0ff" opacity="0.7"/>
<rect x="764" y="146.45" width="4.7" height="4.7" fill="#3c3cd8"/>
<text transform="translate(766.36,152.3) rotate(-90)" x="0" y="3.24" font-size="9" text-anchor="end" fill="#2c3026" stroke="#2c3026" stroke-width="0.32">7</text>
<line x1="782.22" y1="141.4" x2="782.22" y2="163.6" stroke="#741616" stroke-width="2" stroke-linecap="butt"/>
<text transform="translate(782.02,135.5) rotate(-90)" x="0" y="3.31" font-size="9.2" text-anchor="start" fill="#2c3026" stroke="#2c3026" stroke-width="0.32">D1</text>
<rect x="774.22" y="145.2" width="7.2" height="7.2" fill="#eef0ff" opacity="0.7"/>
<rect x="775.47" y="146.45" width="4.7" height="4.7" fill="#3c3cd8"/>
<text transform="translate(777.82,152.3) rotate(-90)" x="0" y="3.24" font-size="9" text-anchor="end" fill="#2c3026" stroke="#2c3026" stroke-width="0.32">8</text>
<line x1="793.69" y1="141.4" x2="793.69" y2="163.6" stroke="#741616" stroke-width="2" stroke-linecap="butt"/>
<text transform="translate(793.49,135.5) rotate(-90)" x="0" y="3.31" font-size="9.2" text-anchor="start" fill="#2c3026" stroke="#2c3026" stroke-width="0.32">D2</text>
<rect x="785.69" y="145.2" width="7.2" height="7.2" fill="#f6e6e0" opacity="0.7"/>
<rect x="786.94" y="146.45" width="4.7" height="4.7" fill="#e05858"/>
<text transform="translate(789.29,152.3) rotate(-90)" x="0" y="3.24" font-size="9" text-anchor="end" fill="#2c3026" stroke="#2c3026" stroke-width="0.32">9</text>
<line x1="805.15" y1="141.4" x2="805.15" y2="163.6" stroke="#741616" stroke-width="2" stroke-linecap="butt"/>
<text transform="translate(804.95,135.5) rotate(-90)" x="0" y="3.31" font-size="9.2" text-anchor="start" fill="#2c3026" stroke="#2c3026" stroke-width="0.32">D3</text>
<rect x="797.15" y="145.2" width="7.2" height="7.2" fill="#eef0ff" opacity="0.7"/>
<rect x="798.4" y="146.45" width="4.7" height="4.7" fill="#3c3cd8"/>
<text transform="translate(800.75,152.3) rotate(-90)" x="0" y="3.24" font-size="9" text-anchor="end" fill="#2c3026" stroke="#2c3026" stroke-width="0.32">10</text>
<line x1="816.62" y1="141.4" x2="816.62" y2="163.6" stroke="#741616" stroke-width="2" stroke-linecap="butt"/>
<text transform="translate(816.42,135.5) rotate(-90)" x="0" y="3.31" font-size="9.2" text-anchor="start" fill="#2c3026" stroke="#2c3026" stroke-width="0.32">D4</text>
<rect x="808.62" y="145.2" width="7.2" height="7.2" fill="#f6e6e0" opacity="0.7"/>
<rect x="809.87" y="146.45" width="4.7" height="4.7" fill="#e05858"/>
<text transform="translate(812.22,152.3) rotate(-90)" x="0" y="3.24" font-size="9" text-anchor="end" fill="#2c3026" stroke="#2c3026" stroke-width="0.32">11</text>
<line x1="828.08" y1="141.4" x2="828.08" y2="163.6" stroke="#741616" stroke-width="2" stroke-linecap="butt"/>
<text transform="translate(827.88,135.5) rotate(-90)" x="0" y="3.31" font-size="9.2" text-anchor="start" fill="#2c3026" stroke="#2c3026" stroke-width="0.32">D5</text>
<rect x="820.08" y="145.2" width="7.2" height="7.2" fill="#f6e6e0" opacity="0.7"/>
<rect x="821.33" y="146.45" width="4.7" height="4.7" fill="#e05858"/>
<text transform="translate(823.68,152.3) rotate(-90)" x="0" y="3.24" font-size="9" text-anchor="end" fill="#2c3026" stroke="#2c3026" stroke-width="0.32">12</text>
<line x1="839.54" y1="141.4" x2="839.54" y2="163.6" stroke="#741616" stroke-width="2" stroke-linecap="butt"/>
<text transform="translate(839.35,135.5) rotate(-90)" x="0" y="3.31" font-size="9.2" text-anchor="start" fill="#2c3026" stroke="#2c3026" stroke-width="0.32">D6</text>
<rect x="831.54" y="145.2" width="7.2" height="7.2" fill="#eef0ff" opacity="0.7"/>
<rect x="832.79" y="146.45" width="4.7" height="4.7" fill="#3c3cd8"/>
<text transform="translate(835.14,152.3) rotate(-90)" x="0" y="3.24" font-size="9" text-anchor="end" fill="#2c3026" stroke="#2c3026" stroke-width="0.32">13</text>
<line x1="851.01" y1="141.4" x2="851.01" y2="163.6" stroke="#741616" stroke-width="2" stroke-linecap="butt"/>
<text transform="translate(850.81,135.5) rotate(-90)" x="0" y="3.31" font-size="9.2" text-anchor="start" fill="#2c3026" stroke="#2c3026" stroke-width="0.32">D7</text>
<rect x="843.01" y="145.2" width="7.2" height="7.2" fill="#eef0ff" opacity="0.7"/>
<rect x="844.26" y="146.45" width="4.7" height="4.7" fill="#3c3cd8"/>
<text transform="translate(846.61,152.3) rotate(-90)" x="0" y="3.24" font-size="9" text-anchor="end" fill="#2c3026" stroke="#2c3026" stroke-width="0.32">14</text>
<polyline points="679.63,163 679.63,204.5 622.31,204.5 622.31,158.64 645.24,158.64 645.24,181.57" fill="none" stroke="#0d3410" stroke-width="1.85" stroke-linejoin="miter" stroke-linecap="square"/>
<line x1="633.74" y1="181.57" x2="656.74" y2="181.57" stroke="#0d3410" stroke-width="2" stroke-linecap="butt"/>
<line x1="638.74" y1="187.07" x2="651.74" y2="187.07" stroke="#0d3410" stroke-width="2" stroke-linecap="butt"/>
<line x1="643.24" y1="192.57" x2="647.24" y2="192.57" stroke="#0d3410" stroke-width="2" stroke-linecap="butt"/>
<polyline points="690.5,163.6 691.9,165 691.9,192.2" fill="none" stroke="#0d3410" stroke-width="1.85" stroke-linejoin="miter" stroke-linecap="square"/>
<polygon points="686.15,192.2 697.65,192.2 691.9,204.3" fill="none" stroke="#0d3410" stroke-width="2"/>
<polyline points="724.89,163.6 726.29,165 726.29,193.04" fill="none" stroke="#0d3410" stroke-width="1.85" stroke-linejoin="miter" stroke-linecap="square"/>
<circle cx="726.29" cy="193.04" r="3" fill="#0d3410"/>
<text transform="translate(719.1,181.7) rotate(-90)" x="0" y="3.24" font-size="9" text-anchor="start" fill="#2c3026" stroke="#2c3026" stroke-width="0.32">20</text>
<polyline points="736.36,163.6 737.76,165 737.76,193.04" fill="none" stroke="#0d3410" stroke-width="1.85" stroke-linejoin="miter" stroke-linecap="square"/>
<circle cx="737.76" cy="193.04" r="3" fill="#0d3410"/>
<text transform="translate(730.56,181.7) rotate(-90)" x="0" y="3.24" font-size="9" text-anchor="start" fill="#2c3026" stroke="#2c3026" stroke-width="0.32">21</text>
<polyline points="748.43,163 748.43,410.88 725.5,410.88" fill="none" stroke="#0d3410" stroke-width="1.85" stroke-linejoin="miter" stroke-linecap="square"/>
<polyline points="770.75,163.6 772.15,165 772.15,284.76" fill="none" stroke="#0d3410" stroke-width="1.85" stroke-linejoin="miter" stroke-linecap="square"/>
<circle cx="772.15" cy="284.76" r="3" fill="#0d3410"/>
<polyline points="782.22,163.6 783.62,165 783.62,296.23" fill="none" stroke="#0d3410" stroke-width="1.85" stroke-linejoin="miter" stroke-linecap="square"/>
<circle cx="783.62" cy="296.23" r="3" fill="#0d3410"/>
<polyline points="793.69,163.6 795.09,165 795.09,307.69" fill="none" stroke="#0d3410" stroke-width="1.85" stroke-linejoin="miter" stroke-linecap="square"/>
<circle cx="795.09" cy="307.69" r="3" fill="#0d3410"/>
<polyline points="805.15,163.6 806.55,165 806.55,319.16" fill="none" stroke="#0d3410" stroke-width="1.85" stroke-linejoin="miter" stroke-linecap="square"/>
<circle cx="806.55" cy="319.16" r="3" fill="#0d3410"/>
<polyline points="816.62,163.6 818.01,165 818.01,330.62" fill="none" stroke="#0d3410" stroke-width="1.85" stroke-linejoin="miter" stroke-linecap="square"/>
<circle cx="818.01" cy="330.62" r="3" fill="#0d3410"/>
<polyline points="828.08,163.6 829.48,165 829.48,342.09" fill="none" stroke="#0d3410" stroke-width="1.85" stroke-linejoin="miter" stroke-linecap="square"/>
<circle cx="829.48" cy="342.09" r="3" fill="#0d3410"/>
<polyline points="839.54,163.6 840.94,165 840.94,353.55" fill="none" stroke="#0d3410" stroke-width="1.85" stroke-linejoin="miter" stroke-linecap="square"/>
<circle cx="840.94" cy="353.55" r="3" fill="#0d3410"/>
<polyline points="851.01,163.6 852.41,165 852.41,365.02" fill="none" stroke="#0d3410" stroke-width="1.85" stroke-linejoin="miter" stroke-linecap="square"/>
<circle cx="852.41" cy="365.02" r="3" fill="#0d3410"/>
<text x="542.6" y="269.8" font-size="14" text-anchor="start" fill="#2c3026" stroke="#2c3026" stroke-width="0.32"  >U1</text>
<rect x="542.06" y="273.3" width="160.51" height="309.56" fill="#c8c9aa" stroke="#741616" stroke-width="1.8"/>
<text x="542.5" y="593.8" font-size="9.7" text-anchor="start" fill="#2c3026" stroke="#2c3026" stroke-width="0.32" letter-spacing="-0.22" >AT89C51</text>
<line x1="519.12" y1="284.76" x2="542.06" y2="284.76" stroke="#741616" stroke-width="2" stroke-linecap="butt"/>
<text x="548.36" y="287.66" font-size="9.7" text-anchor="start" fill="#2c3026" stroke="#2c3026" stroke-width="0.32" letter-spacing="-0.22" >XTAL1</text>
<text x="531.5" y="282.66" font-size="9.7" text-anchor="end" fill="#2c3026" stroke="#2c3026" stroke-width="0.32" letter-spacing="-0.22" >19</text>
<line x1="519.12" y1="319.16" x2="542.06" y2="319.16" stroke="#741616" stroke-width="2" stroke-linecap="butt"/>
<text x="548.36" y="322.06" font-size="9.7" text-anchor="start" fill="#2c3026" stroke="#2c3026" stroke-width="0.32" letter-spacing="-0.22" >XTAL2</text>
<text x="531.5" y="317.06" font-size="9.7" text-anchor="end" fill="#2c3026" stroke="#2c3026" stroke-width="0.32" letter-spacing="-0.22" >18</text>
<line x1="519.12" y1="365.02" x2="542.06" y2="365.02" stroke="#741616" stroke-width="2" stroke-linecap="butt"/>
<text x="548.36" y="367.92" font-size="9.7" text-anchor="start" fill="#2c3026" stroke="#2c3026" stroke-width="0.32" letter-spacing="-0.22" >RST</text>
<text x="531.5" y="362.92" font-size="9.7" text-anchor="end" fill="#2c3026" stroke="#2c3026" stroke-width="0.32" letter-spacing="-0.22" >9</text>
<rect x="531.4" y="356.42" width="7.2" height="7.2" fill="#f6e6e0" opacity="0.7"/>
<rect x="532.65" y="357.67" width="4.7" height="4.7" fill="#e05858"/>
<line x1="519.12" y1="422.34" x2="542.06" y2="422.34" stroke="#741616" stroke-width="2" stroke-linecap="butt"/>
<text x="548.36" y="425.24" font-size="9.7" text-anchor="start" fill="#2c3026" stroke="#2c3026" stroke-width="0.32" letter-spacing="-0.22" >PSEN</text>
<line x1="548.36" y1="417.74" x2="573.36" y2="417.74" stroke="#2c3026" stroke-width="1" stroke-linecap="butt"/>
<text x="531.5" y="420.24" font-size="9.7" text-anchor="end" fill="#2c3026" stroke="#2c3026" stroke-width="0.32" letter-spacing="-0.22" >29</text>
<rect x="531.4" y="413.74" width="7.2" height="7.2" fill="#f6e6e0" opacity="0.7"/>
<rect x="532.65" y="414.99" width="4.7" height="4.7" fill="#e05858"/>
<line x1="519.12" y1="433.81" x2="542.06" y2="433.81" stroke="#741616" stroke-width="2" stroke-linecap="butt"/>
<text x="548.36" y="436.7" font-size="9.7" text-anchor="start" fill="#2c3026" stroke="#2c3026" stroke-width="0.32" letter-spacing="-0.22" >ALE</text>
<text x="531.5" y="431.7" font-size="9.7" text-anchor="end" fill="#2c3026" stroke="#2c3026" stroke-width="0.32" letter-spacing="-0.22" >30</text>
<rect x="531.4" y="425.2" width="7.2" height="7.2" fill="#f6e6e0" opacity="0.7"/>
<rect x="532.65" y="426.45" width="4.7" height="4.7" fill="#e05858"/>
<line x1="519.12" y1="445.27" x2="542.06" y2="445.27" stroke="#741616" stroke-width="2" stroke-linecap="butt"/>
<text x="548.36" y="448.17" font-size="9.7" text-anchor="start" fill="#2c3026" stroke="#2c3026" stroke-width="0.32" letter-spacing="-0.22" >EA</text>
<line x1="548.36" y1="440.67" x2="559.86" y2="440.67" stroke="#2c3026" stroke-width="1" stroke-linecap="butt"/>
<text x="531.5" y="443.17" font-size="9.7" text-anchor="end" fill="#2c3026" stroke="#2c3026" stroke-width="0.32" letter-spacing="-0.22" >31</text>
<rect x="531.4" y="436.67" width="7.2" height="7.2" fill="#f6e6e0" opacity="0.7"/>
<rect x="532.65" y="437.92" width="4.7" height="4.7" fill="#e05858"/>
<line x1="519.12" y1="491.13" x2="542.06" y2="491.13" stroke="#741616" stroke-width="2" stroke-linecap="butt"/>
<text x="548.36" y="494.03" font-size="9.7" text-anchor="start" fill="#2c3026" stroke="#2c3026" stroke-width="0.32" letter-spacing="-0.22" >P1.0</text>
<text x="531.5" y="489.03" font-size="9.7" text-anchor="end" fill="#2c3026" stroke="#2c3026" stroke-width="0.32" letter-spacing="-0.22" >1</text>
<rect x="531.4" y="482.53" width="7.2" height="7.2" fill="#f6e6e0" opacity="0.7"/>
<rect x="532.65" y="483.78" width="4.7" height="4.7" fill="#e05858"/>
<line x1="519.12" y1="502.6" x2="542.06" y2="502.6" stroke="#741616" stroke-width="2" stroke-linecap="butt"/>
<text x="548.36" y="505.5" font-size="9.7" text-anchor="start" fill="#2c3026" stroke="#2c3026" stroke-width="0.32" letter-spacing="-0.22" >P1.1</text>
<text x="531.5" y="500.5" font-size="9.7" text-anchor="end" fill="#2c3026" stroke="#2c3026" stroke-width="0.32" letter-spacing="-0.22" >2</text>
<rect x="531.4" y="494" width="7.2" height="7.2" fill="#f6e6e0" opacity="0.7"/>
<rect x="532.65" y="495.25" width="4.7" height="4.7" fill="#e05858"/>
<line x1="519.12" y1="514.06" x2="542.06" y2="514.06" stroke="#741616" stroke-width="2" stroke-linecap="butt"/>
<text x="548.36" y="516.96" font-size="9.7" text-anchor="start" fill="#2c3026" stroke="#2c3026" stroke-width="0.32" letter-spacing="-0.22" >P1.2</text>
<text x="531.5" y="511.96" font-size="9.7" text-anchor="end" fill="#2c3026" stroke="#2c3026" stroke-width="0.32" letter-spacing="-0.22" >3</text>
<rect x="531.4" y="505.46" width="7.2" height="7.2" fill="#f6e6e0" opacity="0.7"/>
<rect x="532.65" y="506.71" width="4.7" height="4.7" fill="#e05858"/>
<line x1="519.12" y1="525.52" x2="542.06" y2="525.52" stroke="#741616" stroke-width="2" stroke-linecap="butt"/>
<text x="548.36" y="528.42" font-size="9.7" text-anchor="start" fill="#2c3026" stroke="#2c3026" stroke-width="0.32" letter-spacing="-0.22" >P1.3</text>
<text x="531.5" y="523.42" font-size="9.7" text-anchor="end" fill="#2c3026" stroke="#2c3026" stroke-width="0.32" letter-spacing="-0.22" >4</text>
<rect x="531.4" y="516.92" width="7.2" height="7.2" fill="#f6e6e0" opacity="0.7"/>
<rect x="532.65" y="518.17" width="4.7" height="4.7" fill="#e05858"/>
<line x1="519.12" y1="536.99" x2="542.06" y2="536.99" stroke="#741616" stroke-width="2" stroke-linecap="butt"/>
<text x="548.36" y="539.89" font-size="9.7" text-anchor="start" fill="#2c3026" stroke="#2c3026" stroke-width="0.32" letter-spacing="-0.22" >P1.4</text>
<text x="531.5" y="534.89" font-size="9.7" text-anchor="end" fill="#2c3026" stroke="#2c3026" stroke-width="0.32" letter-spacing="-0.22" >5</text>
<rect x="531.4" y="528.39" width="7.2" height="7.2" fill="#f6e6e0" opacity="0.7"/>
<rect x="532.65" y="529.64" width="4.7" height="4.7" fill="#e05858"/>
<line x1="519.12" y1="548.46" x2="542.06" y2="548.46" stroke="#741616" stroke-width="2" stroke-linecap="butt"/>
<text x="548.36" y="551.36" font-size="9.7" text-anchor="start" fill="#2c3026" stroke="#2c3026" stroke-width="0.32" letter-spacing="-0.22" >P1.5</text>
<text x="531.5" y="546.36" font-size="9.7" text-anchor="end" fill="#2c3026" stroke="#2c3026" stroke-width="0.32" letter-spacing="-0.22" >6</text>
<rect x="531.4" y="539.86" width="7.2" height="7.2" fill="#f6e6e0" opacity="0.7"/>
<rect x="532.65" y="541.11" width="4.7" height="4.7" fill="#e05858"/>
<line x1="519.12" y1="559.92" x2="542.06" y2="559.92" stroke="#741616" stroke-width="2" stroke-linecap="butt"/>
<text x="548.36" y="562.82" font-size="9.7" text-anchor="start" fill="#2c3026" stroke="#2c3026" stroke-width="0.32" letter-spacing="-0.22" >P1.6</text>
<text x="531.5" y="557.82" font-size="9.7" text-anchor="end" fill="#2c3026" stroke="#2c3026" stroke-width="0.32" letter-spacing="-0.22" >7</text>
<rect x="531.4" y="551.32" width="7.2" height="7.2" fill="#f6e6e0" opacity="0.7"/>
<rect x="532.65" y="552.57" width="4.7" height="4.7" fill="#e05858"/>
<line x1="519.12" y1="571.38" x2="542.06" y2="571.38" stroke="#741616" stroke-width="2" stroke-linecap="butt"/>
<text x="548.36" y="574.28" font-size="9.7" text-anchor="start" fill="#2c3026" stroke="#2c3026" stroke-width="0.32" letter-spacing="-0.22" >P1.7</text>
<text x="531.5" y="569.28" font-size="9.7" text-anchor="end" fill="#2c3026" stroke="#2c3026" stroke-width="0.32" letter-spacing="-0.22" >8</text>
<rect x="531.4" y="562.78" width="7.2" height="7.2" fill="#f6e6e0" opacity="0.7"/>
<rect x="532.65" y="564.03" width="4.7" height="4.7" fill="#e05858"/>
<polyline points="542.06,281.26 546.06,284.76 542.06,288.26" fill="none" stroke="#741616" stroke-width="1.5"/>
<line x1="702.57" y1="284.76" x2="725.5" y2="284.76" stroke="#741616" stroke-width="2" stroke-linecap="butt"/>
<text x="697.2" y="287.66" font-size="9.7" text-anchor="end" fill="#2c3026" stroke="#2c3026" stroke-width="0.32" letter-spacing="-0.22" >P0.0/AD0</text>
<text x="714.3" y="282.66" font-size="9.7" text-anchor="start" fill="#2c3026" stroke="#2c3026" stroke-width="0.32" letter-spacing="-0.22" >39</text>
<rect x="706.4" y="275.86" width="7.2" height="7.2" fill="#eef0ff" opacity="0.7"/>
<rect x="707.65" y="277.11" width="4.7" height="4.7" fill="#3c3cd8"/>
<line x1="702.57" y1="296.23" x2="725.5" y2="296.23" stroke="#741616" stroke-width="2" stroke-linecap="butt"/>
<text x="697.2" y="299.12" font-size="9.7" text-anchor="end" fill="#2c3026" stroke="#2c3026" stroke-width="0.32" letter-spacing="-0.22" >P0.1/AD1</text>
<text x="714.3" y="294.12" font-size="9.7" text-anchor="start" fill="#2c3026" stroke="#2c3026" stroke-width="0.32" letter-spacing="-0.22" >38</text>
<rect x="706.4" y="287.32" width="7.2" height="7.2" fill="#eef0ff" opacity="0.7"/>
<rect x="707.65" y="288.57" width="4.7" height="4.7" fill="#3c3cd8"/>
<line x1="702.57" y1="307.69" x2="725.5" y2="307.69" stroke="#741616" stroke-width="2" stroke-linecap="butt"/>
<text x="697.2" y="310.59" font-size="9.7" text-anchor="end" fill="#2c3026" stroke="#2c3026" stroke-width="0.32" letter-spacing="-0.22" >P0.2/AD2</text>
<text x="714.3" y="305.59" font-size="9.7" text-anchor="start" fill="#2c3026" stroke="#2c3026" stroke-width="0.32" letter-spacing="-0.22" >37</text>
<rect x="706.4" y="298.79" width="7.2" height="7.2" fill="#f6e6e0" opacity="0.7"/>
<rect x="707.65" y="300.04" width="4.7" height="4.7" fill="#e05858"/>
<line x1="702.57" y1="319.16" x2="725.5" y2="319.16" stroke="#741616" stroke-width="2" stroke-linecap="butt"/>
<text x="697.2" y="322.06" font-size="9.7" text-anchor="end" fill="#2c3026" stroke="#2c3026" stroke-width="0.32" letter-spacing="-0.22" >P0.3/AD3</text>
<text x="714.3" y="317.06" font-size="9.7" text-anchor="start" fill="#2c3026" stroke="#2c3026" stroke-width="0.32" letter-spacing="-0.22" >36</text>
<rect x="706.4" y="310.25" width="7.2" height="7.2" fill="#eef0ff" opacity="0.7"/>
<rect x="707.65" y="311.5" width="4.7" height="4.7" fill="#3c3cd8"/>
<line x1="702.57" y1="330.62" x2="725.5" y2="330.62" stroke="#741616" stroke-width="2" stroke-linecap="butt"/>
<text x="697.2" y="333.52" font-size="9.7" text-anchor="end" fill="#2c3026" stroke="#2c3026" stroke-width="0.32" letter-spacing="-0.22" >P0.4/AD4</text>
<text x="714.3" y="328.52" font-size="9.7" text-anchor="start" fill="#2c3026" stroke="#2c3026" stroke-width="0.32" letter-spacing="-0.22" >35</text>
<rect x="706.4" y="321.72" width="7.2" height="7.2" fill="#f6e6e0" opacity="0.7"/>
<rect x="707.65" y="322.97" width="4.7" height="4.7" fill="#e05858"/>
<line x1="702.57" y1="342.09" x2="725.5" y2="342.09" stroke="#741616" stroke-width="2" stroke-linecap="butt"/>
<text x="697.2" y="344.99" font-size="9.7" text-anchor="end" fill="#2c3026" stroke="#2c3026" stroke-width="0.32" letter-spacing="-0.22" >P0.5/AD5</text>
<text x="714.3" y="339.99" font-size="9.7" text-anchor="start" fill="#2c3026" stroke="#2c3026" stroke-width="0.32" letter-spacing="-0.22" >34</text>
<rect x="706.4" y="333.19" width="7.2" height="7.2" fill="#f6e6e0" opacity="0.7"/>
<rect x="707.65" y="334.44" width="4.7" height="4.7" fill="#e05858"/>
<line x1="702.57" y1="353.55" x2="725.5" y2="353.55" stroke="#741616" stroke-width="2" stroke-linecap="butt"/>
<text x="697.2" y="356.45" font-size="9.7" text-anchor="end" fill="#2c3026" stroke="#2c3026" stroke-width="0.32" letter-spacing="-0.22" >P0.6/AD6</text>
<text x="714.3" y="351.45" font-size="9.7" text-anchor="start" fill="#2c3026" stroke="#2c3026" stroke-width="0.32" letter-spacing="-0.22" >33</text>
<rect x="706.4" y="344.65" width="7.2" height="7.2" fill="#eef0ff" opacity="0.7"/>
<rect x="707.65" y="345.9" width="4.7" height="4.7" fill="#3c3cd8"/>
<line x1="702.57" y1="365.02" x2="725.5" y2="365.02" stroke="#741616" stroke-width="2" stroke-linecap="butt"/>
<text x="697.2" y="367.92" font-size="9.7" text-anchor="end" fill="#2c3026" stroke="#2c3026" stroke-width="0.32" letter-spacing="-0.22" >P0.7/AD7</text>
<text x="714.3" y="362.92" font-size="9.7" text-anchor="start" fill="#2c3026" stroke="#2c3026" stroke-width="0.32" letter-spacing="-0.22" >32</text>
<rect x="706.4" y="356.12" width="7.2" height="7.2" fill="#eef0ff" opacity="0.7"/>
<rect x="707.65" y="357.37" width="4.7" height="4.7" fill="#3c3cd8"/>
<line x1="702.57" y1="387.94" x2="725.5" y2="387.94" stroke="#741616" stroke-width="2" stroke-linecap="butt"/>
<text x="697.2" y="390.84" font-size="9.7" text-anchor="end" fill="#2c3026" stroke="#2c3026" stroke-width="0.32" letter-spacing="-0.22" >P2.0/A8</text>
<text x="714.3" y="385.84" font-size="9.7" text-anchor="start" fill="#2c3026" stroke="#2c3026" stroke-width="0.32" letter-spacing="-0.22" >21</text>
<rect x="706.4" y="379.04" width="7.2" height="7.2" fill="#f6e6e0" opacity="0.7"/>
<rect x="707.65" y="380.29" width="4.7" height="4.7" fill="#e05858"/>
<line x1="702.57" y1="399.41" x2="725.5" y2="399.41" stroke="#741616" stroke-width="2" stroke-linecap="butt"/>
<text x="697.2" y="402.31" font-size="9.7" text-anchor="end" fill="#2c3026" stroke="#2c3026" stroke-width="0.32" letter-spacing="-0.22" >P2.1/A9</text>
<text x="714.3" y="397.31" font-size="9.7" text-anchor="start" fill="#2c3026" stroke="#2c3026" stroke-width="0.32" letter-spacing="-0.22" >22</text>
<rect x="706.4" y="390.51" width="7.2" height="7.2" fill="#eef0ff" opacity="0.7"/>
<rect x="707.65" y="391.76" width="4.7" height="4.7" fill="#3c3cd8"/>
<line x1="702.57" y1="410.88" x2="725.5" y2="410.88" stroke="#741616" stroke-width="2" stroke-linecap="butt"/>
<text x="697.2" y="413.77" font-size="9.7" text-anchor="end" fill="#2c3026" stroke="#2c3026" stroke-width="0.32" letter-spacing="-0.22" >P2.2/A10</text>
<text x="714.3" y="408.77" font-size="9.7" text-anchor="start" fill="#2c3026" stroke="#2c3026" stroke-width="0.32" letter-spacing="-0.22" >23</text>
<rect x="706.4" y="401.97" width="7.2" height="7.2" fill="#eef0ff" opacity="0.7"/>
<rect x="707.65" y="403.22" width="4.7" height="4.7" fill="#3c3cd8"/>
<line x1="702.57" y1="422.34" x2="725.5" y2="422.34" stroke="#741616" stroke-width="2" stroke-linecap="butt"/>
<text x="697.2" y="425.24" font-size="9.7" text-anchor="end" fill="#2c3026" stroke="#2c3026" stroke-width="0.32" letter-spacing="-0.22" >P2.3/A11</text>
<text x="714.3" y="420.24" font-size="9.7" text-anchor="start" fill="#2c3026" stroke="#2c3026" stroke-width="0.32" letter-spacing="-0.22" >24</text>
<rect x="706.4" y="413.44" width="7.2" height="7.2" fill="#f6e6e0" opacity="0.7"/>
<rect x="707.65" y="414.69" width="4.7" height="4.7" fill="#e05858"/>
<line x1="702.57" y1="433.81" x2="725.5" y2="433.81" stroke="#741616" stroke-width="2" stroke-linecap="butt"/>
<text x="697.2" y="436.7" font-size="9.7" text-anchor="end" fill="#2c3026" stroke="#2c3026" stroke-width="0.32" letter-spacing="-0.22" >P2.4/A12</text>
<text x="714.3" y="431.7" font-size="9.7" text-anchor="start" fill="#2c3026" stroke="#2c3026" stroke-width="0.32" letter-spacing="-0.22" >25</text>
<rect x="706.4" y="424.9" width="7.2" height="7.2" fill="#f6e6e0" opacity="0.7"/>
<rect x="707.65" y="426.15" width="4.7" height="4.7" fill="#e05858"/>
<line x1="702.57" y1="445.27" x2="725.5" y2="445.27" stroke="#741616" stroke-width="2" stroke-linecap="butt"/>
<text x="697.2" y="448.17" font-size="9.7" text-anchor="end" fill="#2c3026" stroke="#2c3026" stroke-width="0.32" letter-spacing="-0.22" >P2.5/A13</text>
<text x="714.3" y="443.17" font-size="9.7" text-anchor="start" fill="#2c3026" stroke="#2c3026" stroke-width="0.32" letter-spacing="-0.22" >26</text>
<rect x="706.4" y="436.37" width="7.2" height="7.2" fill="#f6e6e0" opacity="0.7"/>
<rect x="707.65" y="437.62" width="4.7" height="4.7" fill="#e05858"/>
<line x1="702.57" y1="456.74" x2="725.5" y2="456.74" stroke="#741616" stroke-width="2" stroke-linecap="butt"/>
<text x="697.2" y="459.63" font-size="9.7" text-anchor="end" fill="#2c3026" stroke="#2c3026" stroke-width="0.32" letter-spacing="-0.22" >P2.6/A14</text>
<text x="714.3" y="454.63" font-size="9.7" text-anchor="start" fill="#2c3026" stroke="#2c3026" stroke-width="0.32" letter-spacing="-0.22" >27</text>
<rect x="706.4" y="447.83" width="7.2" height="7.2" fill="#f6e6e0" opacity="0.7"/>
<rect x="707.65" y="449.08" width="4.7" height="4.7" fill="#e05858"/>
<line x1="702.57" y1="468.2" x2="725.5" y2="468.2" stroke="#741616" stroke-width="2" stroke-linecap="butt"/>
<text x="697.2" y="471.1" font-size="9.7" text-anchor="end" fill="#2c3026" stroke="#2c3026" stroke-width="0.32" letter-spacing="-0.22" >P2.7/A15</text>
<text x="714.3" y="466.1" font-size="9.7" text-anchor="start" fill="#2c3026" stroke="#2c3026" stroke-width="0.32" letter-spacing="-0.22" >28</text>
<rect x="706.4" y="459.3" width="7.2" height="7.2" fill="#f6e6e0" opacity="0.7"/>
<rect x="707.65" y="460.55" width="4.7" height="4.7" fill="#e05858"/>
<line x1="702.57" y1="491.13" x2="725.5" y2="491.13" stroke="#741616" stroke-width="2" stroke-linecap="butt"/>
<text x="697.2" y="494.03" font-size="9.7" text-anchor="end" fill="#2c3026" stroke="#2c3026" stroke-width="0.32" letter-spacing="-0.22" >P3.0/RXD</text>
<text x="714.3" y="489.03" font-size="9.7" text-anchor="start" fill="#2c3026" stroke="#2c3026" stroke-width="0.32" letter-spacing="-0.22" >10</text>
<rect x="706.4" y="482.23" width="7.2" height="7.2" fill="#eef0ff" opacity="0.7"/>
<rect x="707.65" y="483.48" width="4.7" height="4.7" fill="#3c3cd8"/>
<line x1="702.57" y1="502.6" x2="725.5" y2="502.6" stroke="#741616" stroke-width="2" stroke-linecap="butt"/>
<text x="697.2" y="505.5" font-size="9.7" text-anchor="end" fill="#2c3026" stroke="#2c3026" stroke-width="0.32" letter-spacing="-0.22" >P3.1/TXD</text>
<text x="714.3" y="500.5" font-size="9.7" text-anchor="start" fill="#2c3026" stroke="#2c3026" stroke-width="0.32" letter-spacing="-0.22" >11</text>
<rect x="706.4" y="493.69" width="7.2" height="7.2" fill="#eef0ff" opacity="0.7"/>
<rect x="707.65" y="494.94" width="4.7" height="4.7" fill="#3c3cd8"/>
<line x1="702.57" y1="514.06" x2="725.5" y2="514.06" stroke="#741616" stroke-width="2" stroke-linecap="butt"/>
<text x="697.2" y="516.96" font-size="9.7" text-anchor="end" fill="#2c3026" stroke="#2c3026" stroke-width="0.32" letter-spacing="-0.22" >P3.2/INT0</text>
<text x="714.3" y="511.96" font-size="9.7" text-anchor="start" fill="#2c3026" stroke="#2c3026" stroke-width="0.32" letter-spacing="-0.22" >12</text>
<rect x="706.4" y="505.16" width="7.2" height="7.2" fill="#f6e6e0" opacity="0.7"/>
<rect x="707.65" y="506.41" width="4.7" height="4.7" fill="#e05858"/>
<line x1="702.57" y1="525.52" x2="725.5" y2="525.52" stroke="#741616" stroke-width="2" stroke-linecap="butt"/>
<text x="697.2" y="528.42" font-size="9.7" text-anchor="end" fill="#2c3026" stroke="#2c3026" stroke-width="0.32" letter-spacing="-0.22" >P3.3/INT1</text>
<text x="714.3" y="523.42" font-size="9.7" text-anchor="start" fill="#2c3026" stroke="#2c3026" stroke-width="0.32" letter-spacing="-0.22" >13</text>
<rect x="706.4" y="516.62" width="7.2" height="7.2" fill="#eef0ff" opacity="0.7"/>
<rect x="707.65" y="517.88" width="4.7" height="4.7" fill="#3c3cd8"/>
<line x1="702.57" y1="536.99" x2="725.5" y2="536.99" stroke="#741616" stroke-width="2" stroke-linecap="butt"/>
<text x="697.2" y="539.89" font-size="9.7" text-anchor="end" fill="#2c3026" stroke="#2c3026" stroke-width="0.32" letter-spacing="-0.22" >P3.4/T0</text>
<text x="714.3" y="534.89" font-size="9.7" text-anchor="start" fill="#2c3026" stroke="#2c3026" stroke-width="0.32" letter-spacing="-0.22" >14</text>
<rect x="706.4" y="528.09" width="7.2" height="7.2" fill="#eef0ff" opacity="0.7"/>
<rect x="707.65" y="529.34" width="4.7" height="4.7" fill="#3c3cd8"/>
<line x1="702.57" y1="548.46" x2="725.5" y2="548.46" stroke="#741616" stroke-width="2" stroke-linecap="butt"/>
<text x="697.2" y="551.36" font-size="9.7" text-anchor="end" fill="#2c3026" stroke="#2c3026" stroke-width="0.32" letter-spacing="-0.22" >P3.5/T1</text>
<text x="714.3" y="546.36" font-size="9.7" text-anchor="start" fill="#2c3026" stroke="#2c3026" stroke-width="0.32" letter-spacing="-0.22" >15</text>
<rect x="706.4" y="539.56" width="7.2" height="7.2" fill="#eef0ff" opacity="0.7"/>
<rect x="707.65" y="540.81" width="4.7" height="4.7" fill="#3c3cd8"/>
<line x1="702.57" y1="559.92" x2="725.5" y2="559.92" stroke="#741616" stroke-width="2" stroke-linecap="butt"/>
<text x="697.2" y="562.82" font-size="9.7" text-anchor="end" fill="#2c3026" stroke="#2c3026" stroke-width="0.32" letter-spacing="-0.22" >P3.6/WR</text>
<text x="714.3" y="557.82" font-size="9.7" text-anchor="start" fill="#2c3026" stroke="#2c3026" stroke-width="0.32" letter-spacing="-0.22" >16</text>
<rect x="706.4" y="551.02" width="7.2" height="7.2" fill="#eef0ff" opacity="0.7"/>
<rect x="707.65" y="552.27" width="4.7" height="4.7" fill="#3c3cd8"/>
<line x1="702.57" y1="571.38" x2="725.5" y2="571.38" stroke="#741616" stroke-width="2" stroke-linecap="butt"/>
<text x="697.2" y="574.28" font-size="9.7" text-anchor="end" fill="#2c3026" stroke="#2c3026" stroke-width="0.32" letter-spacing="-0.22" >P3.7/RD</text>
<text x="714.3" y="569.28" font-size="9.7" text-anchor="start" fill="#2c3026" stroke="#2c3026" stroke-width="0.32" letter-spacing="-0.22" >17</text>
<rect x="706.4" y="562.49" width="7.2" height="7.2" fill="#f6e6e0" opacity="0.7"/>
<rect x="707.65" y="563.74" width="4.7" height="4.7" fill="#e05858"/>
<line x1="677.7" y1="509.26" x2="697.2" y2="509.26" stroke="#2c3026" stroke-width="1" stroke-linecap="butt"/>
<line x1="677.7" y1="520.73" x2="697.2" y2="520.73" stroke="#2c3026" stroke-width="1" stroke-linecap="butt"/>
<line x1="682.7" y1="555.12" x2="697.2" y2="555.12" stroke="#2c3026" stroke-width="1" stroke-linecap="butt"/>
<line x1="684" y1="566.59" x2="697.2" y2="566.59" stroke="#2c3026" stroke-width="1" stroke-linecap="butt"/>
<polyline points="725.5,284.76 886,284.76" fill="none" stroke="#0d3410" stroke-width="1.85" stroke-linejoin="miter" stroke-linecap="square"/>
<polyline points="725.5,296.23 886,296.23" fill="none" stroke="#0d3410" stroke-width="1.85" stroke-linejoin="miter" stroke-linecap="square"/>
<polyline points="725.5,307.69 886,307.69" fill="none" stroke="#0d3410" stroke-width="1.85" stroke-linejoin="miter" stroke-linecap="square"/>
<polyline points="725.5,319.16 886,319.16" fill="none" stroke="#0d3410" stroke-width="1.85" stroke-linejoin="miter" stroke-linecap="square"/>
<polyline points="725.5,330.62 886,330.62" fill="none" stroke="#0d3410" stroke-width="1.85" stroke-linejoin="miter" stroke-linecap="square"/>
<polyline points="725.5,342.09 886,342.09" fill="none" stroke="#0d3410" stroke-width="1.85" stroke-linejoin="miter" stroke-linecap="square"/>
<polyline points="725.5,353.55 886,353.55" fill="none" stroke="#0d3410" stroke-width="1.85" stroke-linejoin="miter" stroke-linecap="square"/>
<polyline points="725.5,365.02 886,365.02" fill="none" stroke="#0d3410" stroke-width="1.85" stroke-linejoin="miter" stroke-linecap="square"/>
<polyline points="725.5,387.94 736.96,387.94" fill="none" stroke="#0d3410" stroke-width="1.85" stroke-linejoin="miter" stroke-linecap="square"/>
<circle cx="736.96" cy="387.94" r="3" fill="#0d3410"/>
<text x="738" y="385.25" font-size="9" text-anchor="start" fill="#2c3026" stroke="#2c3026" stroke-width="0.32"  >20</text>
<polyline points="725.5,399.41 736.96,399.41" fill="none" stroke="#0d3410" stroke-width="1.85" stroke-linejoin="miter" stroke-linecap="square"/>
<circle cx="736.96" cy="399.41" r="3" fill="#0d3410"/>
<text x="738" y="396.71" font-size="9" text-anchor="start" fill="#2c3026" stroke="#2c3026" stroke-width="0.32"  >21</text>
<polyline points="725.5,422.34 759.89,422.34" fill="none" stroke="#0d3410" stroke-width="1.85" stroke-linejoin="miter" stroke-linecap="square"/>
<circle cx="759.89" cy="422.34" r="3" fill="#0d3410"/>
<text x="738" y="419.64" font-size="9" text-anchor="start" fill="#2c3026" stroke="#2c3026" stroke-width="0.32"  >23</text>
<polyline points="725.5,433.81 759.89,433.81" fill="none" stroke="#0d3410" stroke-width="1.85" stroke-linejoin="miter" stroke-linecap="square"/>
<circle cx="759.89" cy="433.81" r="3" fill="#0d3410"/>
<text x="738" y="431.11" font-size="9" text-anchor="start" fill="#2c3026" stroke="#2c3026" stroke-width="0.32"  >24</text>
<polyline points="725.5,445.27 759.89,445.27" fill="none" stroke="#0d3410" stroke-width="1.85" stroke-linejoin="miter" stroke-linecap="square"/>
<circle cx="759.89" cy="445.27" r="3" fill="#0d3410"/>
<text x="738" y="442.57" font-size="9" text-anchor="start" fill="#2c3026" stroke="#2c3026" stroke-width="0.32"  >25</text>
<polyline points="725.5,456.74 759.89,456.74" fill="none" stroke="#0d3410" stroke-width="1.85" stroke-linejoin="miter" stroke-linecap="square"/>
<circle cx="759.89" cy="456.74" r="3" fill="#0d3410"/>
<text x="749.6" y="454.04" font-size="9" text-anchor="start" fill="#2c3026" stroke="#2c3026" stroke-width="0.32"  >26</text>
<polyline points="725.5,468.2 759.89,468.2" fill="none" stroke="#0d3410" stroke-width="1.85" stroke-linejoin="miter" stroke-linecap="square"/>
<circle cx="759.89" cy="468.2" r="3" fill="#0d3410"/>
<text x="749.6" y="465.5" font-size="9" text-anchor="start" fill="#2c3026" stroke="#2c3026" stroke-width="0.32"  >27</text>
<polyline points="725.5,491.13 771.36,491.13" fill="none" stroke="#0d3410" stroke-width="1.85" stroke-linejoin="miter" stroke-linecap="square"/>
<circle cx="771.36" cy="491.13" r="3" fill="#0d3410"/>
<text x="749.8" y="488.43" font-size="9" text-anchor="start" fill="#2c3026" stroke="#2c3026" stroke-width="0.32"  >30</text>
<polyline points="725.5,502.6 771.36,502.6" fill="none" stroke="#0d3410" stroke-width="1.85" stroke-linejoin="miter" stroke-linecap="square"/>
<circle cx="771.36" cy="502.6" r="3" fill="#0d3410"/>
<text x="749.8" y="499.9" font-size="9" text-anchor="start" fill="#2c3026" stroke="#2c3026" stroke-width="0.32"  >31</text>
<polyline points="725.5,514.06 771.36,514.06" fill="none" stroke="#0d3410" stroke-width="1.85" stroke-linejoin="miter" stroke-linecap="square"/>
<circle cx="771.36" cy="514.06" r="3" fill="#0d3410"/>
<text x="749.8" y="511.36" font-size="9" text-anchor="start" fill="#2c3026" stroke="#2c3026" stroke-width="0.32"  >32</text>
<polyline points="725.5,525.52 771.36,525.52" fill="none" stroke="#0d3410" stroke-width="1.85" stroke-linejoin="miter" stroke-linecap="square"/>
<circle cx="771.36" cy="525.52" r="3" fill="#0d3410"/>
<text x="749.8" y="522.82" font-size="9" text-anchor="start" fill="#2c3026" stroke="#2c3026" stroke-width="0.32"  >33</text>
<polyline points="725.5,536.99 771.36,536.99" fill="none" stroke="#0d3410" stroke-width="1.85" stroke-linejoin="miter" stroke-linecap="square"/>
<circle cx="771.36" cy="536.99" r="3" fill="#0d3410"/>
<text x="749.8" y="534.29" font-size="9" text-anchor="start" fill="#2c3026" stroke="#2c3026" stroke-width="0.32"  >34</text>
<polyline points="725.5,548.46 771.36,548.46" fill="none" stroke="#0d3410" stroke-width="1.85" stroke-linejoin="miter" stroke-linecap="square"/>
<circle cx="771.36" cy="548.46" r="3" fill="#0d3410"/>
<text x="749.8" y="545.75" font-size="9" text-anchor="start" fill="#2c3026" stroke="#2c3026" stroke-width="0.32"  >35</text>
<polyline points="725.5,559.92 771.36,559.92" fill="none" stroke="#0d3410" stroke-width="1.85" stroke-linejoin="miter" stroke-linecap="square"/>
<circle cx="771.36" cy="559.92" r="3" fill="#0d3410"/>
<text x="749.8" y="557.22" font-size="9" text-anchor="start" fill="#2c3026" stroke="#2c3026" stroke-width="0.32"  >36</text>
<polyline points="519.12,491.13 484.73,491.13" fill="none" stroke="#0d3410" stroke-width="1.85" stroke-linejoin="miter" stroke-linecap="square"/>
<circle cx="484.73" cy="491.13" r="3" fill="#0d3410"/>
<text x="497.4" y="489.13" font-size="9" text-anchor="start" fill="#2c3026" stroke="#2c3026" stroke-width="0.32"  >11</text>
<polyline points="519.12,502.6 484.73,502.6" fill="none" stroke="#0d3410" stroke-width="1.85" stroke-linejoin="miter" stroke-linecap="square"/>
<circle cx="484.73" cy="502.6" r="3" fill="#0d3410"/>
<text x="497.4" y="500.6" font-size="9" text-anchor="start" fill="#2c3026" stroke="#2c3026" stroke-width="0.32"  >12</text>
<polyline points="519.12,514.06 484.73,514.06" fill="none" stroke="#0d3410" stroke-width="1.85" stroke-linejoin="miter" stroke-linecap="square"/>
<circle cx="484.73" cy="514.06" r="3" fill="#0d3410"/>
<text x="497.4" y="512.06" font-size="9" text-anchor="start" fill="#2c3026" stroke="#2c3026" stroke-width="0.32"  >13</text>
<polyline points="519.12,525.52 484.73,525.52" fill="none" stroke="#0d3410" stroke-width="1.85" stroke-linejoin="miter" stroke-linecap="square"/>
<circle cx="484.73" cy="525.52" r="3" fill="#0d3410"/>
<text x="497.4" y="523.52" font-size="9" text-anchor="start" fill="#2c3026" stroke="#2c3026" stroke-width="0.32"  >14</text>
<polyline points="519.12,536.99 484.73,536.99" fill="none" stroke="#0d3410" stroke-width="1.85" stroke-linejoin="miter" stroke-linecap="square"/>
<circle cx="484.73" cy="536.99" r="3" fill="#0d3410"/>
<text x="497.4" y="534.99" font-size="9" text-anchor="start" fill="#2c3026" stroke="#2c3026" stroke-width="0.32"  >15</text>
<polyline points="519.12,548.46 484.73,548.46" fill="none" stroke="#0d3410" stroke-width="1.85" stroke-linejoin="miter" stroke-linecap="square"/>
<circle cx="484.73" cy="548.46" r="3" fill="#0d3410"/>
<text x="497.4" y="546.46" font-size="9" text-anchor="start" fill="#2c3026" stroke="#2c3026" stroke-width="0.32"  >16</text>
<polyline points="519.12,559.92 484.73,559.92" fill="none" stroke="#0d3410" stroke-width="1.85" stroke-linejoin="miter" stroke-linecap="square"/>
<circle cx="484.73" cy="559.92" r="3" fill="#0d3410"/>
<text x="497.4" y="557.92" font-size="9" text-anchor="start" fill="#2c3026" stroke="#2c3026" stroke-width="0.32"  >17</text>
<polyline points="519.12,571.38 484.73,571.38" fill="none" stroke="#0d3410" stroke-width="1.85" stroke-linejoin="miter" stroke-linecap="square"/>
<circle cx="484.73" cy="571.38" r="3" fill="#0d3410"/>
<text x="497.4" y="569.38" font-size="9" text-anchor="start" fill="#2c3026" stroke="#2c3026" stroke-width="0.32"  >18</text>
<polyline points="347.15,273.3 347.15,250.36 370.08,250.36" fill="none" stroke="#0d3410" stroke-width="1.85" stroke-linejoin="miter" stroke-linecap="square"/>
<line x1="335.4" y1="273.3" x2="358.9" y2="273.3" stroke="#0d3410" stroke-width="2" stroke-linecap="butt"/>
<line x1="341.15" y1="278.9" x2="353.15" y2="278.9" stroke="#0d3410" stroke-width="2" stroke-linecap="butt"/>
<line x1="345.4" y1="284.5" x2="348.9" y2="284.5" stroke="#0d3410" stroke-width="2" stroke-linecap="butt"/>
<polyline points="370.08,250.36 370.08,365.02 438.7,365.02" fill="none" stroke="#0d3410" stroke-width="1.85" stroke-linejoin="miter" stroke-linecap="square"/>
<circle cx="370.08" cy="250.36" r="3" fill="#0d3410"/>
<circle cx="370.08" cy="319.16" r="3" fill="#0d3410"/>
<line x1="373.08" y1="250.36" x2="381.54" y2="250.36" stroke="#0d3410" stroke-width="1.85" stroke-linecap="butt"/>
<line x1="381.54" y1="250.36" x2="401.3" y2="250.36" stroke="#741616" stroke-width="2" stroke-linecap="butt"/>
<line x1="407.7" y1="250.36" x2="427.4" y2="250.36" stroke="#741616" stroke-width="2" stroke-linecap="butt"/>
<line x1="401.3" y1="239.36" x2="401.3" y2="261.37" stroke="#741616" stroke-width="2" stroke-linecap="butt"/>
<line x1="407.7" y1="239.36" x2="407.7" y2="261.37" stroke="#741616" stroke-width="2" stroke-linecap="butt"/>
<rect x="378" y="240.16" width="7.2" height="7.2" fill="#eef0ff" opacity="0.7"/>
<rect x="379.25" y="241.41" width="4.7" height="4.7" fill="#3c3cd8"/>
<text x="393.7" y="235.6" font-size="14" text-anchor="start" fill="#2c3026" stroke="#2c3026" stroke-width="0.32"  >C1</text>
<text x="393" y="271.8" font-size="9.7" text-anchor="start" fill="#2c3026" stroke="#2c3026" stroke-width="0.32" letter-spacing="-0.22" >22pF</text>
<line x1="373.08" y1="319.16" x2="381.54" y2="319.16" stroke="#0d3410" stroke-width="1.85" stroke-linecap="butt"/>
<line x1="381.54" y1="319.16" x2="401.3" y2="319.16" stroke="#741616" stroke-width="2" stroke-linecap="butt"/>
<line x1="407.7" y1="319.16" x2="427.4" y2="319.16" stroke="#741616" stroke-width="2" stroke-linecap="butt"/>
<line x1="401.3" y1="308.16" x2="401.3" y2="330.16" stroke="#741616" stroke-width="2" stroke-linecap="butt"/>
<line x1="407.7" y1="308.16" x2="407.7" y2="330.16" stroke="#741616" stroke-width="2" stroke-linecap="butt"/>
<rect x="378" y="308.95" width="7.2" height="7.2" fill="#eef0ff" opacity="0.7"/>
<rect x="379.25" y="310.2" width="4.7" height="4.7" fill="#3c3cd8"/>
<text x="393.7" y="303.5" font-size="14" text-anchor="start" fill="#2c3026" stroke="#2c3026" stroke-width="0.32"  >C2</text>
<text x="393" y="340.3" font-size="9.7" text-anchor="start" fill="#2c3026" stroke="#2c3026" stroke-width="0.32" letter-spacing="-0.22" >22pF</text>
<polyline points="427.4,250.36 496.19,250.36 496.19,284.76 519.12,284.76" fill="none" stroke="#0d3410" stroke-width="1.85" stroke-linejoin="miter" stroke-linecap="square"/>
<polyline points="427.4,319.16 519.12,319.16" fill="none" stroke="#0d3410" stroke-width="1.85" stroke-linejoin="miter" stroke-linecap="square"/>
<circle cx="450.33" cy="250.36" r="3" fill="#0d3410"/>
<circle cx="450.33" cy="319.16" r="3" fill="#0d3410"/>
<line x1="450.33" y1="253.36" x2="450.33" y2="272.9" stroke="#741616" stroke-width="2" stroke-linecap="butt"/>
<line x1="450.33" y1="295.8" x2="450.33" y2="316.16" stroke="#1c3014" stroke-width="2" stroke-linecap="butt"/>
<line x1="432.9" y1="272.9" x2="467.1" y2="272.9" stroke="#741616" stroke-width="2" stroke-linecap="butt"/>
<line x1="432.9" y1="295.8" x2="467.1" y2="295.8" stroke="#741616" stroke-width="2" stroke-linecap="butt"/>
<rect x="438.7" y="278.8" width="23.5" height="11.4" fill="#d0cdb8" stroke="#741616" stroke-width="2"/>
<text x="475" y="287" font-size="14" text-anchor="start" fill="#2c3026" stroke="#2c3026" stroke-width="0.32"  >X1</text>
<text x="476" y="299" font-size="9.7" text-anchor="start" fill="#2c3026" stroke="#2c3026" stroke-width="0.32" letter-spacing="-0.22" >12M</text>
<rect x="438.7" y="360.4" width="35" height="8.8" fill="#d2c4a8" stroke="#741616" stroke-width="1.8"/>
<line x1="425.4" y1="365.02" x2="438.7" y2="365.02" stroke="#741616" stroke-width="2" stroke-linecap="butt"/>
<line x1="473.7" y1="365.02" x2="486.5" y2="365.02" stroke="#741616" stroke-width="2" stroke-linecap="butt"/>
<polyline points="486.5,365.02 519.12,365.02" fill="none" stroke="#0d3410" stroke-width="1.85" stroke-linejoin="miter" stroke-linecap="square"/>
<circle cx="496.19" cy="365.02" r="3" fill="#0d3410"/>
<rect x="423.4" y="355.8" width="7.2" height="7.2" fill="#eef0ff" opacity="0.7"/>
<rect x="424.65" y="357.05" width="4.7" height="4.7" fill="#3c3cd8"/>
<rect x="481.4" y="355.8" width="7.2" height="7.2" fill="#f6e6e0" opacity="0.7"/>
<rect x="482.65" y="357.05" width="4.7" height="4.7" fill="#e05858"/>
<text x="438.7" y="358.8" font-size="14" text-anchor="start" fill="#2c3026" stroke="#2c3026" stroke-width="0.32"  >R1</text>
<text x="439.4" y="380" font-size="9.7" text-anchor="start" fill="#2c3026" stroke="#2c3026" stroke-width="0.32" letter-spacing="-0.22" >10k</text>
<polyline points="370.08,410.88 404.47,410.88" fill="none" stroke="#0d3410" stroke-width="1.85" stroke-linejoin="miter" stroke-linecap="square"/>
<line x1="404.47" y1="410.88" x2="429" y2="410.88" stroke="#741616" stroke-width="2" stroke-linecap="butt"/>
<rect x="429" y="399" width="6.5" height="22.8" fill="#d2c4a8" stroke="#741616" stroke-width="1.6"/>
<defs><pattern id="hatch" width="4.2" height="4.2" patternUnits="userSpaceOnUse" patternTransform="rotate(40)"><rect width="4.2" height="4.2" fill="#dcc0b0"/><line x1="1" y1="0" x2="1" y2="4.2" stroke="#741616" stroke-width="2"/></pattern></defs>
<rect x="442" y="399" width="6.5" height="22.8" fill="url(#hatch)" stroke="#741616" stroke-width="1.6"/>
<line x1="448.5" y1="410.88" x2="461.8" y2="410.88" stroke="#741616" stroke-width="2" stroke-linecap="butt"/>
<polyline points="461.8,410.88 496.19,410.88 496.19,365.02" fill="none" stroke="#0d3410" stroke-width="1.85" stroke-linejoin="miter" stroke-linecap="square"/>
<rect x="412.4" y="401.4" width="7.2" height="7.2" fill="#f6e6e0" opacity="0.7"/>
<rect x="413.65" y="402.65" width="4.7" height="4.7" fill="#e05858"/>
<rect x="458.4" y="401.4" width="7.2" height="7.2" fill="#f6e6e0" opacity="0.7"/>
<rect x="459.65" y="402.65" width="4.7" height="4.7" fill="#e05858"/>
<text x="428" y="396.3" font-size="14" text-anchor="start" fill="#2c3026" stroke="#2c3026" stroke-width="0.32"  >C3</text>
<text x="428" y="433" font-size="9.7" text-anchor="start" fill="#2c3026" stroke="#2c3026" stroke-width="0.32" letter-spacing="-0.22" >10uF</text>
<polygon points="370.08,377.7 364.33,388.2 375.83,388.2" fill="none" stroke="#0d3410" stroke-width="2" stroke-linejoin="miter"/>
<polyline points="370.08,388.2 370.08,445.27 519.12,445.27" fill="none" stroke="#0d3410" stroke-width="1.85" stroke-linejoin="miter" stroke-linecap="square"/>
<circle cx="370.08" cy="410.88" r="3" fill="#0d3410"/>
<rect x="897.8" y="250" width="28.9" height="126" fill="#c8c9aa" stroke="#741616" stroke-width="1.8"/>
<text x="897.8" y="246.6" font-size="14" text-anchor="start" fill="#2c3026" stroke="#2c3026" stroke-width="0.32"  >RP1</text>
<line x1="886" y1="261.83" x2="897.8" y2="261.83" stroke="#741616" stroke-width="2" stroke-linecap="butt"/>
<text x="886.5" y="259.73" font-size="9.7" text-anchor="end" fill="#2c3026" stroke="#2c3026" stroke-width="0.32" letter-spacing="-0.22" >1</text>
<rect x="886.8" y="252.93" width="7.2" height="7.2" fill="#f6e6e0" opacity="0.7"/>
<rect x="888.05" y="254.18" width="4.7" height="4.7" fill="#e05858"/>
<line x1="886" y1="284.76" x2="897.8" y2="284.76" stroke="#741616" stroke-width="2" stroke-linecap="butt"/>
<text x="886.5" y="282.66" font-size="9.7" text-anchor="end" fill="#2c3026" stroke="#2c3026" stroke-width="0.32" letter-spacing="-0.22" >2</text>
<rect x="886.8" y="275.86" width="7.2" height="7.2" fill="#eef0ff" opacity="0.7"/>
<rect x="888.05" y="277.11" width="4.7" height="4.7" fill="#3c3cd8"/>
<line x1="886" y1="296.23" x2="897.8" y2="296.23" stroke="#741616" stroke-width="2" stroke-linecap="butt"/>
<text x="886.5" y="294.12" font-size="9.7" text-anchor="end" fill="#2c3026" stroke="#2c3026" stroke-width="0.32" letter-spacing="-0.22" >3</text>
<rect x="886.8" y="287.32" width="7.2" height="7.2" fill="#eef0ff" opacity="0.7"/>
<rect x="888.05" y="288.57" width="4.7" height="4.7" fill="#3c3cd8"/>
<line x1="886" y1="307.69" x2="897.8" y2="307.69" stroke="#741616" stroke-width="2" stroke-linecap="butt"/>
<text x="886.5" y="305.59" font-size="9.7" text-anchor="end" fill="#2c3026" stroke="#2c3026" stroke-width="0.32" letter-spacing="-0.22" >4</text>
<rect x="886.8" y="298.79" width="7.2" height="7.2" fill="#f6e6e0" opacity="0.7"/>
<rect x="888.05" y="300.04" width="4.7" height="4.7" fill="#e05858"/>
<line x1="886" y1="319.16" x2="897.8" y2="319.16" stroke="#741616" stroke-width="2" stroke-linecap="butt"/>
<text x="886.5" y="317.06" font-size="9.7" text-anchor="end" fill="#2c3026" stroke="#2c3026" stroke-width="0.32" letter-spacing="-0.22" >5</text>
<rect x="886.8" y="310.25" width="7.2" height="7.2" fill="#eef0ff" opacity="0.7"/>
<rect x="888.05" y="311.5" width="4.7" height="4.7" fill="#3c3cd8"/>
<line x1="886" y1="330.62" x2="897.8" y2="330.62" stroke="#741616" stroke-width="2" stroke-linecap="butt"/>
<text x="886.5" y="328.52" font-size="9.7" text-anchor="end" fill="#2c3026" stroke="#2c3026" stroke-width="0.32" letter-spacing="-0.22" >6</text>
<rect x="886.8" y="321.72" width="7.2" height="7.2" fill="#f6e6e0" opacity="0.7"/>
<rect x="888.05" y="322.97" width="4.7" height="4.7" fill="#e05858"/>
<line x1="886" y1="342.09" x2="897.8" y2="342.09" stroke="#741616" stroke-width="2" stroke-linecap="butt"/>
<text x="886.5" y="339.99" font-size="9.7" text-anchor="end" fill="#2c3026" stroke="#2c3026" stroke-width="0.32" letter-spacing="-0.22" >7</text>
<rect x="886.8" y="333.19" width="7.2" height="7.2" fill="#f6e6e0" opacity="0.7"/>
<rect x="888.05" y="334.44" width="4.7" height="4.7" fill="#e05858"/>
<line x1="886" y1="353.55" x2="897.8" y2="353.55" stroke="#741616" stroke-width="2" stroke-linecap="butt"/>
<text x="886.5" y="351.45" font-size="9.7" text-anchor="end" fill="#2c3026" stroke="#2c3026" stroke-width="0.32" letter-spacing="-0.22" >8</text>
<rect x="886.8" y="344.65" width="7.2" height="7.2" fill="#eef0ff" opacity="0.7"/>
<rect x="888.05" y="345.9" width="4.7" height="4.7" fill="#3c3cd8"/>
<line x1="886" y1="365.02" x2="897.8" y2="365.02" stroke="#741616" stroke-width="2" stroke-linecap="butt"/>
<text x="886.5" y="362.92" font-size="9.7" text-anchor="end" fill="#2c3026" stroke="#2c3026" stroke-width="0.32" letter-spacing="-0.22" >9</text>
<rect x="886.8" y="356.12" width="7.2" height="7.2" fill="#eef0ff" opacity="0.7"/>
<rect x="888.05" y="357.37" width="4.7" height="4.7" fill="#3c3cd8"/>
<polygon points="863.08,239.6 857.33,250 868.83,250" fill="none" stroke="#0d3410" stroke-width="2" stroke-linejoin="miter"/>
<polyline points="863.08,250 863.08,261.83 886,261.83" fill="none" stroke="#0d3410" stroke-width="1.85" stroke-linejoin="miter" stroke-linecap="square"/>
<circle cx="943.33" cy="330.62" r="3" fill="#0d3410"/>
<polyline points="943.33,330.62 978,330.62" fill="none" stroke="#0d3410" stroke-width="1.85" stroke-linejoin="miter" stroke-linecap="square"/>
<line x1="978" y1="330.62" x2="988" y2="330.62" stroke="#5a1818" stroke-width="2" stroke-linecap="butt"/>
<line x1="1015.7" y1="330.62" x2="1025" y2="330.62" stroke="#5a1818" stroke-width="2" stroke-linecap="butt"/>
<polyline points="1025,330.62 1070.4,330.62 1070.4,307.9" fill="none" stroke="#0d3410" stroke-width="1.85" stroke-linejoin="miter" stroke-linecap="square"/>
<polygon points="1070.4,296.3 1064.6,307.9 1076.2,307.9" fill="none" stroke="#0d3410" stroke-width="2" stroke-linejoin="miter"/>
<circle cx="1001.8" cy="330.62" r="14.6" fill="#f0c8c8" opacity="0.6"/>
<circle cx="1001.8" cy="330.62" r="13.8" fill="#34080c"/>
<polygon points="995.4,330.62 1005.5,325.12 1005.5,336.12" fill="none" stroke="#701828" stroke-width="1.1"/>
<line x1="995.4" y1="324.62" x2="995.4" y2="336.62" stroke="#701828" stroke-width="1.2" stroke-linecap="butt"/>
<line x1="988" y1="330.62" x2="1015.7" y2="330.62" stroke="#5a1020" stroke-width="1" stroke-linecap="butt"/>
<rect x="974.7" y="332.2" width="7.2" height="7.2" fill="#f6e6e0" opacity="0.7"/>
<rect x="975.9" y="333.4" width="4.8" height="4.8" fill="#e05858"/>
<rect x="1020.7" y="332.2" width="7.2" height="7.2" fill="#f6e6e0" opacity="0.7"/>
<rect x="1021.9" y="333.4" width="4.8" height="4.8" fill="#e05858"/>
<text x="988" y="313" font-size="14" text-anchor="start" fill="#2c3026" stroke="#2c3026" stroke-width="0.32"  >D1</text>
<text x="988" y="354.8" font-size="9.7" text-anchor="start" fill="#2c3026" stroke="#2c3026" stroke-width="0.32" letter-spacing="-0.22" >LED-RED</text>
<text x="955.6" y="327.5" font-size="9.7" text-anchor="start" fill="#2c3026" stroke="#2c3026" stroke-width="0.32" letter-spacing="-0.22" >26</text>
<circle cx="874.54" cy="468.2" r="3" fill="#0d3410"/>
<polyline points="874.54,468.2 909,468.2" fill="none" stroke="#0d3410" stroke-width="1.85" stroke-linejoin="miter" stroke-linecap="square"/>
<line x1="909" y1="468.2" x2="915.4" y2="468.2" stroke="#741616" stroke-width="2" stroke-linecap="butt"/>
<circle cx="919" cy="468.2" r="3.3" fill="#e8c8c0" stroke="#741616" stroke-width="1.5"/>
<circle cx="946.4" cy="468.2" r="3.3" fill="#e8c8c0" stroke="#741616" stroke-width="1.5"/>
<line x1="949.8" y1="468.2" x2="956" y2="468.2" stroke="#741616" stroke-width="2" stroke-linecap="butt"/>
<line x1="956" y1="468.2" x2="961" y2="468.2" stroke="#0d3410" stroke-width="2" stroke-linecap="butt"/>
<line x1="915.4" y1="458.4" x2="949" y2="458.4" stroke="#741616" stroke-width="1.8" stroke-linecap="butt"/>
<rect x="922.5" y="452.6" width="20.3" height="5.8" fill="#dcc4a8" stroke="#741616" stroke-width="1.5"/>
<circle cx="956" cy="456.4" r="4.4" fill="#8e1010"/>
<rect x="957.4" y="458.7" width="7.2" height="7.2" fill="#eef0ff" opacity="0.7"/>
<rect x="958.6" y="459.9" width="4.8" height="4.8" fill="#3c3cd8"/>
<text x="887" y="465.3" font-size="9.7" text-anchor="start" fill="#2c3026" stroke="#2c3026" stroke-width="0.32" letter-spacing="-0.22" >24</text>
<rect x="900" y="458.7" width="7.2" height="7.2" fill="#f6e6e0" opacity="0.7"/>
<rect x="901.3" y="460" width="4.6" height="4.6" fill="#e05858"/>
<circle cx="961" cy="468.2" r="3" fill="#0d3410"/>
<path d="M978.9,473.8h4v5.3l-1,0.6 M980.9,471.8v2.5q0,3.5,-2,5.5 M984.2,474.1h3v5.3h-3z" fill="none" stroke="#6a2a2a" stroke-width="1.2" opacity="0.9"/>
<path d="M979.5,518.3l1,1 M979.5,524.3l1.5,-2.5 M982,517.8h6 M982,517.8v8 M983,519.8h3 M983,521.8h2.5v2.5h-2.5z M986.5,516.8l0.5,6l1,2.5 M988,520.8l-2.5,4.5" fill="none" stroke="#9a3a48" stroke-width="0.9" opacity="1"/>
<circle cx="874.54" cy="514.06" r="3" fill="#0d3410"/>
<polyline points="874.54,514.06 909,514.06" fill="none" stroke="#0d3410" stroke-width="1.85" stroke-linejoin="miter" stroke-linecap="square"/>
<line x1="909" y1="514.06" x2="915.4" y2="514.06" stroke="#741616" stroke-width="2" stroke-linecap="butt"/>
<circle cx="919" cy="514.06" r="3.3" fill="#e8c8c0" stroke="#741616" stroke-width="1.5"/>
<circle cx="946.4" cy="514.06" r="3.3" fill="#e8c8c0" stroke="#741616" stroke-width="1.5"/>
<line x1="949.8" y1="514.06" x2="956" y2="514.06" stroke="#741616" stroke-width="2" stroke-linecap="butt"/>
<line x1="956" y1="514.06" x2="961" y2="514.06" stroke="#0d3410" stroke-width="2" stroke-linecap="butt"/>
<line x1="915.4" y1="504.26" x2="949" y2="504.26" stroke="#741616" stroke-width="1.8" stroke-linecap="butt"/>
<rect x="922.5" y="498.46" width="20.3" height="5.8" fill="#dcc4a8" stroke="#741616" stroke-width="1.5"/>
<circle cx="956" cy="502.26" r="4.4" fill="#8e1010"/>
<rect x="957.4" y="504.56" width="7.2" height="7.2" fill="#eef0ff" opacity="0.7"/>
<rect x="958.6" y="505.76" width="4.8" height="4.8" fill="#3c3cd8"/>
<text x="887" y="511.16" font-size="9.7" text-anchor="start" fill="#2c3026" stroke="#2c3026" stroke-width="0.32" letter-spacing="-0.22" >25</text>
<rect x="900" y="504.56" width="7.2" height="7.2" fill="#f6e6e0" opacity="0.7"/>
<rect x="901.3" y="505.86" width="4.6" height="4.6" fill="#e05858"/>
<circle cx="961" cy="514.06" r="3" fill="#0d3410"/>
<polyline points="961,468.2 961,514.06 966.7,514.06 966.7,537" fill="none" stroke="#0d3410" stroke-width="1.85" stroke-linejoin="miter" stroke-linecap="square"/>
<line x1="955.2" y1="537" x2="978.2" y2="537" stroke="#0d3410" stroke-width="2" stroke-linecap="butt"/>
<line x1="960.5" y1="542.5" x2="972.9" y2="542.5" stroke="#0d3410" stroke-width="2" stroke-linecap="butt"/>
<line x1="965.2" y1="548" x2="968.2" y2="548" stroke="#0d3410" stroke-width="2" stroke-linecap="butt"/>
<polygon points="60.8,445.5 55.25,455.9 66.35,455.9" fill="none" stroke="#0d3410" stroke-width="2" stroke-linejoin="miter"/>
<rect x="50.7" y="453" width="7.2" height="7.2" fill="#f6e6e0" opacity="0.7"/>
<rect x="51.95" y="454.25" width="4.7" height="4.7" fill="#e05858"/>
<line x1="60.8" y1="455.9" x2="60.8" y2="473.4" stroke="#741616" stroke-width="2" stroke-linecap="butt"/>
<rect x="56.4" y="473.4" width="8.8" height="34.7" fill="#d2c4a8" stroke="#741616" stroke-width="1.6"/>
<line x1="60.8" y1="508.1" x2="60.8" y2="537.3" stroke="#741616" stroke-width="2" stroke-linecap="butt"/>
<circle cx="46.5" cy="479.1" r="4.4" fill="#8e1010"/>
<circle cx="46.5" cy="505" r="4.4" fill="#8e1010"/>
<circle cx="69.5" cy="490.3" r="1.8" fill="none" stroke="#741616" stroke-width="1.2"/>
<line x1="65.5" y1="490.8" x2="71.1" y2="490.8" stroke="#741616" stroke-width="1.4" stroke-linecap="butt"/>
<text x="73.2" y="453.3" font-size="14" text-anchor="start" fill="#2c3026" stroke="#2c3026" stroke-width="0.32"  >RV1</text>
<text x="73.7" y="536" font-size="9.7" text-anchor="start" fill="#2c3026" stroke="#2c3026" stroke-width="0.32" letter-spacing="-0.22" font-weight="bold">1k</text>
<rect x="50.7" y="522.1" width="7.2" height="7.2" fill="#eef0ff" opacity="0.7"/>
<rect x="51.95" y="523.35" width="4.7" height="4.7" fill="#3c3cd8"/>
<circle cx="60.8" cy="537.3" r="3" fill="#0d3410"/>
<line x1="49.3" y1="549" x2="72.3" y2="549" stroke="#0d3410" stroke-width="2" stroke-linecap="butt"/>
<line x1="53.3" y1="554" x2="68.3" y2="554" stroke="#0d3410" stroke-width="2" stroke-linecap="butt"/>
<line x1="59.3" y1="559" x2="62.3" y2="559" stroke="#0d3410" stroke-width="2" stroke-linecap="butt"/>
<line x1="60.8" y1="537.3" x2="60.8" y2="549" stroke="#0d3410" stroke-width="2" stroke-linecap="butt"/>
<polyline points="71.1,491.13 221.03,491.13 221.03,525.52 243.96,525.52" fill="none" stroke="#0d3410" stroke-width="1.85" stroke-linejoin="miter" stroke-linecap="square"/>
<circle cx="129.31" cy="491.13" r="3" fill="#0d3410"/>
<polyline points="129.31,491.13 129.31,514" fill="none" stroke="#0d3410" stroke-width="1.85" stroke-linejoin="miter" stroke-linecap="square"/>
<circle cx="129.31" cy="537.2" r="23.2" fill="#d4cfc0" stroke="#6a1818" stroke-width="1.7"/>
<rect x="114" y="528.6" width="31.8" height="10.8" fill="#0c640c" stroke="#3a9a3a" stroke-width="0.8"/>
<text x="130" y="537.6" font-size="9.7" text-anchor="middle" fill="#98ec98" stroke="#98ec98" stroke-width="0.1" letter-spacing="-0.22" >+2.95</text>
<text x="129.3" y="551" font-size="9.5" text-anchor="middle" fill="#7a3535" stroke="#7a3535" stroke-width="0.15"  font-style="italic">Volts</text>
<text x="122.8" y="509.5" font-size="9" text-anchor="middle" fill="#5a4040" stroke="#5a4040" stroke-width="0.3"  >+</text>
<line x1="120.3" y1="567.4" x2="125.6" y2="567.4" stroke="#5a5050" stroke-width="1.2" stroke-linecap="butt"/>
<rect x="131.6" y="567.8" width="7.2" height="7.2" fill="#eef0ff" opacity="0.7"/>
<rect x="132.7" y="568.9" width="5" height="5" fill="#3c3cd8"/>
<polyline points="129.31,560.4 129.31,571.38 14.66,571.38 14.66,525.52 49.1,525.52 60.8,537.3" fill="none" stroke="#0d3410" stroke-width="1.85" stroke-linejoin="miter" stroke-linecap="square"/>
<path d="M108,598.7v3 M110,598.2v3 M109,597.7v5l-1.5,3 M109,601.7l1.5,3 M111,597.2h4.5v8.5h-4.5z M111.5,600.2h3.5 M113.2,598.2v6 M113.2,600.7l-1.5,3 M113.2,600.7l1.5,3" fill="none" stroke="#742424" stroke-width="0.9" opacity="1"/>
<path d="M116.8,597.2h8 M120.8,597.2v3.5 M116.8,598.2v2 M124.8,598.2v2 M116.8,598.2h8 M118.3,599.3000000000001h1.5 M121.8,599.3000000000001h1.5 M117.3,601.2h7l-6,3 M119.3,602.2l5,2 M117.3,603.7h7 M120.8,603.2v2.5l-2,0.5" fill="none" stroke="#742424" stroke-width="1.0" opacity="1"/>
<path d="M127.6,597.2l-1.5,3 M127.1,599.2v6.5 M129.1,597.7h5 M131.6,596.9000000000001v1.5 M130.1,599.2h3.5v5h-3.5z M130.1,600.9000000000001h3.5 M130.1,602.5h3.5 M129.1,605.4000000000001h5.5 M129.1,599.2v6.2" fill="none" stroke="#742424" stroke-width="1.0" opacity="1"/>
<rect x="243.96" y="514.06" width="114.65" height="194.91" fill="#c8c9aa" stroke="#741616" stroke-width="1.8"/>
<text x="244" y="510.7" font-size="14" text-anchor="start" fill="#2c3026" stroke="#2c3026" stroke-width="0.32"  >U3</text>
<text x="244" y="720" font-size="9.7" text-anchor="start" fill="#2c3026" stroke="#2c3026" stroke-width="0.32" letter-spacing="-0.22" >ADC0809</text>
<line x1="221.03" y1="525.52" x2="243.96" y2="525.52" stroke="#741616" stroke-width="2" stroke-linecap="butt"/>
<text x="250.46" y="528.42" font-size="9.7" text-anchor="start" fill="#2c3026" stroke="#2c3026" stroke-width="0.32" letter-spacing="-0.22" >IN0</text>
<text x="233.3" y="523.42" font-size="9.7" text-anchor="end" fill="#2c3026" stroke="#2c3026" stroke-width="0.32" letter-spacing="-0.22" >26</text>
<line x1="221.03" y1="536.99" x2="243.96" y2="536.99" stroke="#741616" stroke-width="2" stroke-linecap="butt"/>
<text x="250.46" y="539.89" font-size="9.7" text-anchor="start" fill="#2c3026" stroke="#2c3026" stroke-width="0.32" letter-spacing="-0.22" >IN1</text>
<text x="233.3" y="534.89" font-size="9.7" text-anchor="end" fill="#2c3026" stroke="#2c3026" stroke-width="0.32" letter-spacing="-0.22" >27</text>
<line x1="221.03" y1="548.46" x2="243.96" y2="548.46" stroke="#741616" stroke-width="2" stroke-linecap="butt"/>
<text x="250.46" y="551.36" font-size="9.7" text-anchor="start" fill="#2c3026" stroke="#2c3026" stroke-width="0.32" letter-spacing="-0.22" >IN2</text>
<text x="233.3" y="546.36" font-size="9.7" text-anchor="end" fill="#2c3026" stroke="#2c3026" stroke-width="0.32" letter-spacing="-0.22" >28</text>
<line x1="221.03" y1="559.92" x2="243.96" y2="559.92" stroke="#741616" stroke-width="2" stroke-linecap="butt"/>
<text x="250.46" y="562.82" font-size="9.7" text-anchor="start" fill="#2c3026" stroke="#2c3026" stroke-width="0.32" letter-spacing="-0.22" >IN3</text>
<text x="233.3" y="557.82" font-size="9.7" text-anchor="end" fill="#2c3026" stroke="#2c3026" stroke-width="0.32" letter-spacing="-0.22" >1</text>
<line x1="221.03" y1="571.38" x2="243.96" y2="571.38" stroke="#741616" stroke-width="2" stroke-linecap="butt"/>
<text x="250.46" y="574.28" font-size="9.7" text-anchor="start" fill="#2c3026" stroke="#2c3026" stroke-width="0.32" letter-spacing="-0.22" >IN4</text>
<text x="233.3" y="569.28" font-size="9.7" text-anchor="end" fill="#2c3026" stroke="#2c3026" stroke-width="0.32" letter-spacing="-0.22" >2</text>
<line x1="221.03" y1="582.85" x2="243.96" y2="582.85" stroke="#741616" stroke-width="2" stroke-linecap="butt"/>
<text x="250.46" y="585.75" font-size="9.7" text-anchor="start" fill="#2c3026" stroke="#2c3026" stroke-width="0.32" letter-spacing="-0.22" >IN5</text>
<text x="233.3" y="580.75" font-size="9.7" text-anchor="end" fill="#2c3026" stroke="#2c3026" stroke-width="0.32" letter-spacing="-0.22" >3</text>
<line x1="221.03" y1="594.32" x2="243.96" y2="594.32" stroke="#741616" stroke-width="2" stroke-linecap="butt"/>
<text x="250.46" y="597.22" font-size="9.7" text-anchor="start" fill="#2c3026" stroke="#2c3026" stroke-width="0.32" letter-spacing="-0.22" >IN6</text>
<text x="233.3" y="592.22" font-size="9.7" text-anchor="end" fill="#2c3026" stroke="#2c3026" stroke-width="0.32" letter-spacing="-0.22" >4</text>
<line x1="221.03" y1="605.78" x2="243.96" y2="605.78" stroke="#741616" stroke-width="2" stroke-linecap="butt"/>
<text x="250.46" y="608.68" font-size="9.7" text-anchor="start" fill="#2c3026" stroke="#2c3026" stroke-width="0.32" letter-spacing="-0.22" >IN7</text>
<text x="233.3" y="603.68" font-size="9.7" text-anchor="end" fill="#2c3026" stroke="#2c3026" stroke-width="0.32" letter-spacing="-0.22" >5</text>
<line x1="221.03" y1="628.71" x2="243.96" y2="628.71" stroke="#741616" stroke-width="2" stroke-linecap="butt"/>
<text x="250.46" y="631.61" font-size="9.7" text-anchor="start" fill="#2c3026" stroke="#2c3026" stroke-width="0.32" letter-spacing="-0.22" >ADD A</text>
<text x="233.5" y="626.61" font-size="9.7" text-anchor="end" fill="#2c3026" stroke="#2c3026" stroke-width="0.32" letter-spacing="-0.22" >25</text>
<rect x="233.4" y="619.81" width="7.2" height="7.2" fill="#eef0ff" opacity="0.7"/>
<rect x="234.65" y="621.06" width="4.7" height="4.7" fill="#3c3cd8"/>
<line x1="221.03" y1="640.18" x2="243.96" y2="640.18" stroke="#741616" stroke-width="2" stroke-linecap="butt"/>
<text x="250.46" y="643.08" font-size="9.7" text-anchor="start" fill="#2c3026" stroke="#2c3026" stroke-width="0.32" letter-spacing="-0.22" >ADD B</text>
<text x="233.5" y="638.08" font-size="9.7" text-anchor="end" fill="#2c3026" stroke="#2c3026" stroke-width="0.32" letter-spacing="-0.22" >24</text>
<rect x="233.4" y="631.28" width="7.2" height="7.2" fill="#eef0ff" opacity="0.7"/>
<rect x="234.65" y="632.53" width="4.7" height="4.7" fill="#3c3cd8"/>
<line x1="221.03" y1="651.64" x2="243.96" y2="651.64" stroke="#741616" stroke-width="2" stroke-linecap="butt"/>
<text x="250.46" y="654.54" font-size="9.7" text-anchor="start" fill="#2c3026" stroke="#2c3026" stroke-width="0.32" letter-spacing="-0.22" >ADD C</text>
<text x="233.5" y="649.54" font-size="9.7" text-anchor="end" fill="#2c3026" stroke="#2c3026" stroke-width="0.32" letter-spacing="-0.22" >23</text>
<rect x="233.4" y="642.74" width="7.2" height="7.2" fill="#eef0ff" opacity="0.7"/>
<rect x="234.65" y="643.99" width="4.7" height="4.7" fill="#3c3cd8"/>
<line x1="221.03" y1="663.11" x2="243.96" y2="663.11" stroke="#741616" stroke-width="2" stroke-linecap="butt"/>
<text x="250.46" y="666" font-size="9.7" text-anchor="start" fill="#2c3026" stroke="#2c3026" stroke-width="0.32" letter-spacing="-0.22" >ALE</text>
<text x="233.5" y="661" font-size="9.7" text-anchor="end" fill="#2c3026" stroke="#2c3026" stroke-width="0.32" letter-spacing="-0.22" >22</text>
<rect x="233.4" y="654.21" width="7.2" height="7.2" fill="#ecece6" opacity="0.7"/>
<rect x="234.65" y="655.46" width="4.7" height="4.7" fill="#9a9a90"/>
<line x1="221.03" y1="686.03" x2="243.96" y2="686.03" stroke="#741616" stroke-width="2" stroke-linecap="butt"/>
<text x="250.46" y="688.93" font-size="9.7" text-anchor="start" fill="#2c3026" stroke="#2c3026" stroke-width="0.32" letter-spacing="-0.22" >VREF(+)</text>
<text x="233.5" y="683.93" font-size="9.7" text-anchor="end" fill="#2c3026" stroke="#2c3026" stroke-width="0.32" letter-spacing="-0.22" >12</text>
<rect x="233.4" y="677.13" width="7.2" height="7.2" fill="#f6e6e0" opacity="0.7"/>
<rect x="234.65" y="678.38" width="4.7" height="4.7" fill="#e05858"/>
<line x1="221.03" y1="697.5" x2="243.96" y2="697.5" stroke="#741616" stroke-width="2" stroke-linecap="butt"/>
<text x="250.46" y="700.4" font-size="9.7" text-anchor="start" fill="#2c3026" stroke="#2c3026" stroke-width="0.32" letter-spacing="-0.22" >VREF(-)</text>
<text x="233.5" y="695.4" font-size="9.7" text-anchor="end" fill="#2c3026" stroke="#2c3026" stroke-width="0.32" letter-spacing="-0.22" >16</text>
<rect x="233.4" y="688.6" width="7.2" height="7.2" fill="#eef0ff" opacity="0.7"/>
<rect x="234.65" y="689.85" width="4.7" height="4.7" fill="#3c3cd8"/>
<line x1="358.62" y1="525.52" x2="381.54" y2="525.52" stroke="#741616" stroke-width="2" stroke-linecap="butt"/>
<text x="352.8" y="528.42" font-size="9.7" text-anchor="end" fill="#2c3026" stroke="#2c3026" stroke-width="0.32" letter-spacing="-0.22" >CLOCK</text>
<text x="370" y="523.42" font-size="9.7" text-anchor="start" fill="#2c3026" stroke="#2c3026" stroke-width="0.32" letter-spacing="-0.22" >10</text>
<rect x="362.4" y="516.62" width="7.2" height="7.2" fill="#eef0ff" opacity="0.7"/>
<rect x="363.65" y="517.88" width="4.7" height="4.7" fill="#3c3cd8"/>
<line x1="358.62" y1="536.99" x2="381.54" y2="536.99" stroke="#741616" stroke-width="2" stroke-linecap="butt"/>
<text x="352.8" y="539.89" font-size="9.7" text-anchor="end" fill="#2c3026" stroke="#2c3026" stroke-width="0.32" letter-spacing="-0.22" >START</text>
<text x="370" y="534.89" font-size="9.7" text-anchor="start" fill="#2c3026" stroke="#2c3026" stroke-width="0.32" letter-spacing="-0.22" >6</text>
<rect x="362.4" y="528.09" width="7.2" height="7.2" fill="#eef0ff" opacity="0.7"/>
<rect x="363.65" y="529.34" width="4.7" height="4.7" fill="#3c3cd8"/>
<line x1="358.62" y1="559.92" x2="381.54" y2="559.92" stroke="#741616" stroke-width="2" stroke-linecap="butt"/>
<text x="352.8" y="562.82" font-size="9.7" text-anchor="end" fill="#2c3026" stroke="#2c3026" stroke-width="0.32" letter-spacing="-0.22" >EOC</text>
<text x="370" y="557.82" font-size="9.7" text-anchor="start" fill="#2c3026" stroke="#2c3026" stroke-width="0.32" letter-spacing="-0.22" >7</text>
<rect x="362.4" y="551.02" width="7.2" height="7.2" fill="#f6e6e0" opacity="0.7"/>
<rect x="363.65" y="552.27" width="4.7" height="4.7" fill="#e05858"/>
<line x1="358.62" y1="582.85" x2="381.54" y2="582.85" stroke="#741616" stroke-width="2" stroke-linecap="butt"/>
<text x="352.8" y="585.75" font-size="9.7" text-anchor="end" fill="#2c3026" stroke="#2c3026" stroke-width="0.32" letter-spacing="-0.22" >OUT1</text>
<text x="370" y="580.75" font-size="9.7" text-anchor="start" fill="#2c3026" stroke="#2c3026" stroke-width="0.32" letter-spacing="-0.22" >21</text>
<rect x="362.4" y="573.95" width="7.2" height="7.2" fill="#f6e6e0" opacity="0.7"/>
<rect x="363.65" y="575.2" width="4.7" height="4.7" fill="#e05858"/>
<line x1="358.62" y1="594.32" x2="381.54" y2="594.32" stroke="#741616" stroke-width="2" stroke-linecap="butt"/>
<text x="352.8" y="597.22" font-size="9.7" text-anchor="end" fill="#2c3026" stroke="#2c3026" stroke-width="0.32" letter-spacing="-0.22" >OUT2</text>
<text x="370" y="592.22" font-size="9.7" text-anchor="start" fill="#2c3026" stroke="#2c3026" stroke-width="0.32" letter-spacing="-0.22" >20</text>
<rect x="362.4" y="585.42" width="7.2" height="7.2" fill="#f6e6e0" opacity="0.7"/>
<rect x="363.65" y="586.67" width="4.7" height="4.7" fill="#e05858"/>
<line x1="358.62" y1="605.78" x2="381.54" y2="605.78" stroke="#741616" stroke-width="2" stroke-linecap="butt"/>
<text x="352.8" y="608.68" font-size="9.7" text-anchor="end" fill="#2c3026" stroke="#2c3026" stroke-width="0.32" letter-spacing="-0.22" >OUT3</text>
<text x="370" y="603.68" font-size="9.7" text-anchor="start" fill="#2c3026" stroke="#2c3026" stroke-width="0.32" letter-spacing="-0.22" >19</text>
<rect x="362.4" y="596.88" width="7.2" height="7.2" fill="#f6e6e0" opacity="0.7"/>
<rect x="363.65" y="598.13" width="4.7" height="4.7" fill="#e05858"/>
<line x1="358.62" y1="617.25" x2="381.54" y2="617.25" stroke="#741616" stroke-width="2" stroke-linecap="butt"/>
<text x="352.8" y="620.14" font-size="9.7" text-anchor="end" fill="#2c3026" stroke="#2c3026" stroke-width="0.32" letter-spacing="-0.22" >OUT4</text>
<text x="370" y="615.14" font-size="9.7" text-anchor="start" fill="#2c3026" stroke="#2c3026" stroke-width="0.32" letter-spacing="-0.22" >18</text>
<rect x="362.4" y="608.35" width="7.2" height="7.2" fill="#f6e6e0" opacity="0.7"/>
<rect x="363.65" y="609.6" width="4.7" height="4.7" fill="#e05858"/>
<line x1="358.62" y1="628.71" x2="381.54" y2="628.71" stroke="#741616" stroke-width="2" stroke-linecap="butt"/>
<text x="352.8" y="631.61" font-size="9.7" text-anchor="end" fill="#2c3026" stroke="#2c3026" stroke-width="0.32" letter-spacing="-0.22" >OUT5</text>
<text x="370" y="626.61" font-size="9.7" text-anchor="start" fill="#2c3026" stroke="#2c3026" stroke-width="0.32" letter-spacing="-0.22" >8</text>
<rect x="362.4" y="619.81" width="7.2" height="7.2" fill="#f6e6e0" opacity="0.7"/>
<rect x="363.65" y="621.06" width="4.7" height="4.7" fill="#e05858"/>
<line x1="358.62" y1="640.18" x2="381.54" y2="640.18" stroke="#741616" stroke-width="2" stroke-linecap="butt"/>
<text x="352.8" y="643.08" font-size="9.7" text-anchor="end" fill="#2c3026" stroke="#2c3026" stroke-width="0.32" letter-spacing="-0.22" >OUT6</text>
<text x="370" y="638.08" font-size="9.7" text-anchor="start" fill="#2c3026" stroke="#2c3026" stroke-width="0.32" letter-spacing="-0.22" >15</text>
<rect x="362.4" y="631.28" width="7.2" height="7.2" fill="#f6e6e0" opacity="0.7"/>
<rect x="363.65" y="632.53" width="4.7" height="4.7" fill="#e05858"/>
<line x1="358.62" y1="651.64" x2="381.54" y2="651.64" stroke="#741616" stroke-width="2" stroke-linecap="butt"/>
<text x="352.8" y="654.54" font-size="9.7" text-anchor="end" fill="#2c3026" stroke="#2c3026" stroke-width="0.32" letter-spacing="-0.22" >OUT7</text>
<text x="370" y="649.54" font-size="9.7" text-anchor="start" fill="#2c3026" stroke="#2c3026" stroke-width="0.32" letter-spacing="-0.22" >14</text>
<rect x="362.4" y="642.74" width="7.2" height="7.2" fill="#f6e6e0" opacity="0.7"/>
<rect x="363.65" y="643.99" width="4.7" height="4.7" fill="#e05858"/>
<line x1="358.62" y1="663.11" x2="381.54" y2="663.11" stroke="#741616" stroke-width="2" stroke-linecap="butt"/>
<text x="352.8" y="666" font-size="9.7" text-anchor="end" fill="#2c3026" stroke="#2c3026" stroke-width="0.32" letter-spacing="-0.22" >OUT8</text>
<text x="370" y="661" font-size="9.7" text-anchor="start" fill="#2c3026" stroke="#2c3026" stroke-width="0.32" letter-spacing="-0.22" >17</text>
<rect x="362.4" y="654.21" width="7.2" height="7.2" fill="#f6e6e0" opacity="0.7"/>
<rect x="363.65" y="655.46" width="4.7" height="4.7" fill="#e05858"/>
<line x1="358.62" y1="697.5" x2="381.54" y2="697.5" stroke="#741616" stroke-width="2" stroke-linecap="butt"/>
<text x="352.8" y="700.4" font-size="9.7" text-anchor="end" fill="#2c3026" stroke="#2c3026" stroke-width="0.32" letter-spacing="-0.22" >OE</text>
<text x="370" y="695.4" font-size="9.7" text-anchor="start" fill="#2c3026" stroke="#2c3026" stroke-width="0.32" letter-spacing="-0.22" >9</text>
<rect x="362.4" y="688.6" width="7.2" height="7.2" fill="#eef0ff" opacity="0.7"/>
<rect x="363.65" y="689.85" width="4.7" height="4.7" fill="#3c3cd8"/>
<polyline points="358.62,522.02 354.62,525.52 358.62,529.02" fill="none" stroke="#741616" stroke-width="1.5"/>
<polyline points="381.54,525.52 415.94,525.52" fill="none" stroke="#0d3410" stroke-width="1.85" stroke-linejoin="miter" stroke-linecap="square"/>
<circle cx="415.94" cy="525.52" r="3" fill="#0d3410"/>
<text x="393.6" y="522.82" font-size="9" text-anchor="start" fill="#2c3026" stroke="#2c3026" stroke-width="0.32"  >33</text>
<polyline points="381.54,536.99 415.94,536.99" fill="none" stroke="#0d3410" stroke-width="1.85" stroke-linejoin="miter" stroke-linecap="square"/>
<circle cx="415.94" cy="536.99" r="3" fill="#0d3410"/>
<text x="393.6" y="534.29" font-size="9" text-anchor="start" fill="#2c3026" stroke="#2c3026" stroke-width="0.32"  >30</text>
<polyline points="381.54,559.92 415.94,559.92" fill="none" stroke="#0d3410" stroke-width="1.85" stroke-linejoin="miter" stroke-linecap="square"/>
<circle cx="415.94" cy="559.92" r="3" fill="#0d3410"/>
<text x="393.6" y="557.22" font-size="9" text-anchor="start" fill="#2c3026" stroke="#2c3026" stroke-width="0.32"  >32</text>
<polyline points="381.54,582.85 415.94,582.85" fill="none" stroke="#0d3410" stroke-width="1.85" stroke-linejoin="miter" stroke-linecap="square"/>
<circle cx="415.94" cy="582.85" r="3" fill="#0d3410"/>
<text x="393.6" y="580.15" font-size="9" text-anchor="start" fill="#2c3026" stroke="#2c3026" stroke-width="0.32"  >18</text>
<polyline points="381.54,594.32 415.94,594.32" fill="none" stroke="#0d3410" stroke-width="1.85" stroke-linejoin="miter" stroke-linecap="square"/>
<circle cx="415.94" cy="594.32" r="3" fill="#0d3410"/>
<text x="393.6" y="591.62" font-size="9" text-anchor="start" fill="#2c3026" stroke="#2c3026" stroke-width="0.32"  >17</text>
<polyline points="381.54,605.78 415.94,605.78" fill="none" stroke="#0d3410" stroke-width="1.85" stroke-linejoin="miter" stroke-linecap="square"/>
<circle cx="415.94" cy="605.78" r="3" fill="#0d3410"/>
<text x="393.6" y="603.08" font-size="9" text-anchor="start" fill="#2c3026" stroke="#2c3026" stroke-width="0.32"  >16</text>
<polyline points="381.54,617.25 415.94,617.25" fill="none" stroke="#0d3410" stroke-width="1.85" stroke-linejoin="miter" stroke-linecap="square"/>
<circle cx="415.94" cy="617.25" r="3" fill="#0d3410"/>
<text x="393.6" y="614.54" font-size="9" text-anchor="start" fill="#2c3026" stroke="#2c3026" stroke-width="0.32"  >15</text>
<polyline points="381.54,628.71 415.94,628.71" fill="none" stroke="#0d3410" stroke-width="1.85" stroke-linejoin="miter" stroke-linecap="square"/>
<circle cx="415.94" cy="628.71" r="3" fill="#0d3410"/>
<text x="393.6" y="626.01" font-size="9" text-anchor="start" fill="#2c3026" stroke="#2c3026" stroke-width="0.32"  >14</text>
<polyline points="381.54,640.18 415.94,640.18" fill="none" stroke="#0d3410" stroke-width="1.85" stroke-linejoin="miter" stroke-linecap="square"/>
<circle cx="415.94" cy="640.18" r="3" fill="#0d3410"/>
<text x="393.6" y="637.48" font-size="9" text-anchor="start" fill="#2c3026" stroke="#2c3026" stroke-width="0.32"  >13</text>
<polyline points="381.54,651.64 415.94,651.64" fill="none" stroke="#0d3410" stroke-width="1.85" stroke-linejoin="miter" stroke-linecap="square"/>
<circle cx="415.94" cy="651.64" r="3" fill="#0d3410"/>
<text x="393.6" y="648.94" font-size="9" text-anchor="start" fill="#2c3026" stroke="#2c3026" stroke-width="0.32"  >12</text>
<polyline points="381.54,663.11 415.94,663.11" fill="none" stroke="#0d3410" stroke-width="1.85" stroke-linejoin="miter" stroke-linecap="square"/>
<circle cx="415.94" cy="663.11" r="3" fill="#0d3410"/>
<text x="393.6" y="660.4" font-size="9" text-anchor="start" fill="#2c3026" stroke="#2c3026" stroke-width="0.32"  >11</text>
<polyline points="381.54,697.5 415.94,697.5" fill="none" stroke="#0d3410" stroke-width="1.85" stroke-linejoin="miter" stroke-linecap="square"/>
<circle cx="415.94" cy="697.5" r="3" fill="#0d3410"/>
<text x="393.6" y="694.8" font-size="9" text-anchor="start" fill="#2c3026" stroke="#2c3026" stroke-width="0.32"  >31</text>
<polyline points="221.03,628.71 186.64,628.71" fill="none" stroke="#0d3410" stroke-width="1.85" stroke-linejoin="miter" stroke-linecap="square"/>
<circle cx="186.64" cy="628.71" r="3" fill="#0d3410"/>
<text x="198.7" y="626.01" font-size="9" text-anchor="start" fill="#2c3026" stroke="#2c3026" stroke-width="0.32"  >34</text>
<polyline points="221.03,640.18 186.64,640.18" fill="none" stroke="#0d3410" stroke-width="1.85" stroke-linejoin="miter" stroke-linecap="square"/>
<circle cx="186.64" cy="640.18" r="3" fill="#0d3410"/>
<text x="198.7" y="637.48" font-size="9" text-anchor="start" fill="#2c3026" stroke="#2c3026" stroke-width="0.32"  >35</text>
<polyline points="221.03,651.64 186.64,651.64" fill="none" stroke="#0d3410" stroke-width="1.85" stroke-linejoin="miter" stroke-linecap="square"/>
<circle cx="186.64" cy="651.64" r="3" fill="#0d3410"/>
<text x="198.7" y="648.94" font-size="9" text-anchor="start" fill="#2c3026" stroke="#2c3026" stroke-width="0.32"  >36</text>
<polyline points="221.03,686.03 198.4,686.03" fill="none" stroke="#0d3410" stroke-width="1.85" stroke-linejoin="miter" stroke-linecap="square"/>
<polygon points="186.8,686.03 198.4,680.43 198.4,691.63" fill="none" stroke="#0d3410" stroke-width="2"/>
<polyline points="221.03,697.5 209.57,697.5 209.57,720" fill="none" stroke="#0d3410" stroke-width="1.85" stroke-linejoin="miter" stroke-linecap="square"/>
<line x1="198.07" y1="720" x2="221.07" y2="720" stroke="#0d3410" stroke-width="2" stroke-linecap="butt"/>
<line x1="203.07" y1="725.8" x2="216.07" y2="725.8" stroke="#0d3410" stroke-width="2" stroke-linecap="butt"/>
<line x1="207.57" y1="731.6" x2="211.57" y2="731.6" stroke="#0d3410" stroke-width="2" stroke-linecap="butt"/></svg></body></html>
